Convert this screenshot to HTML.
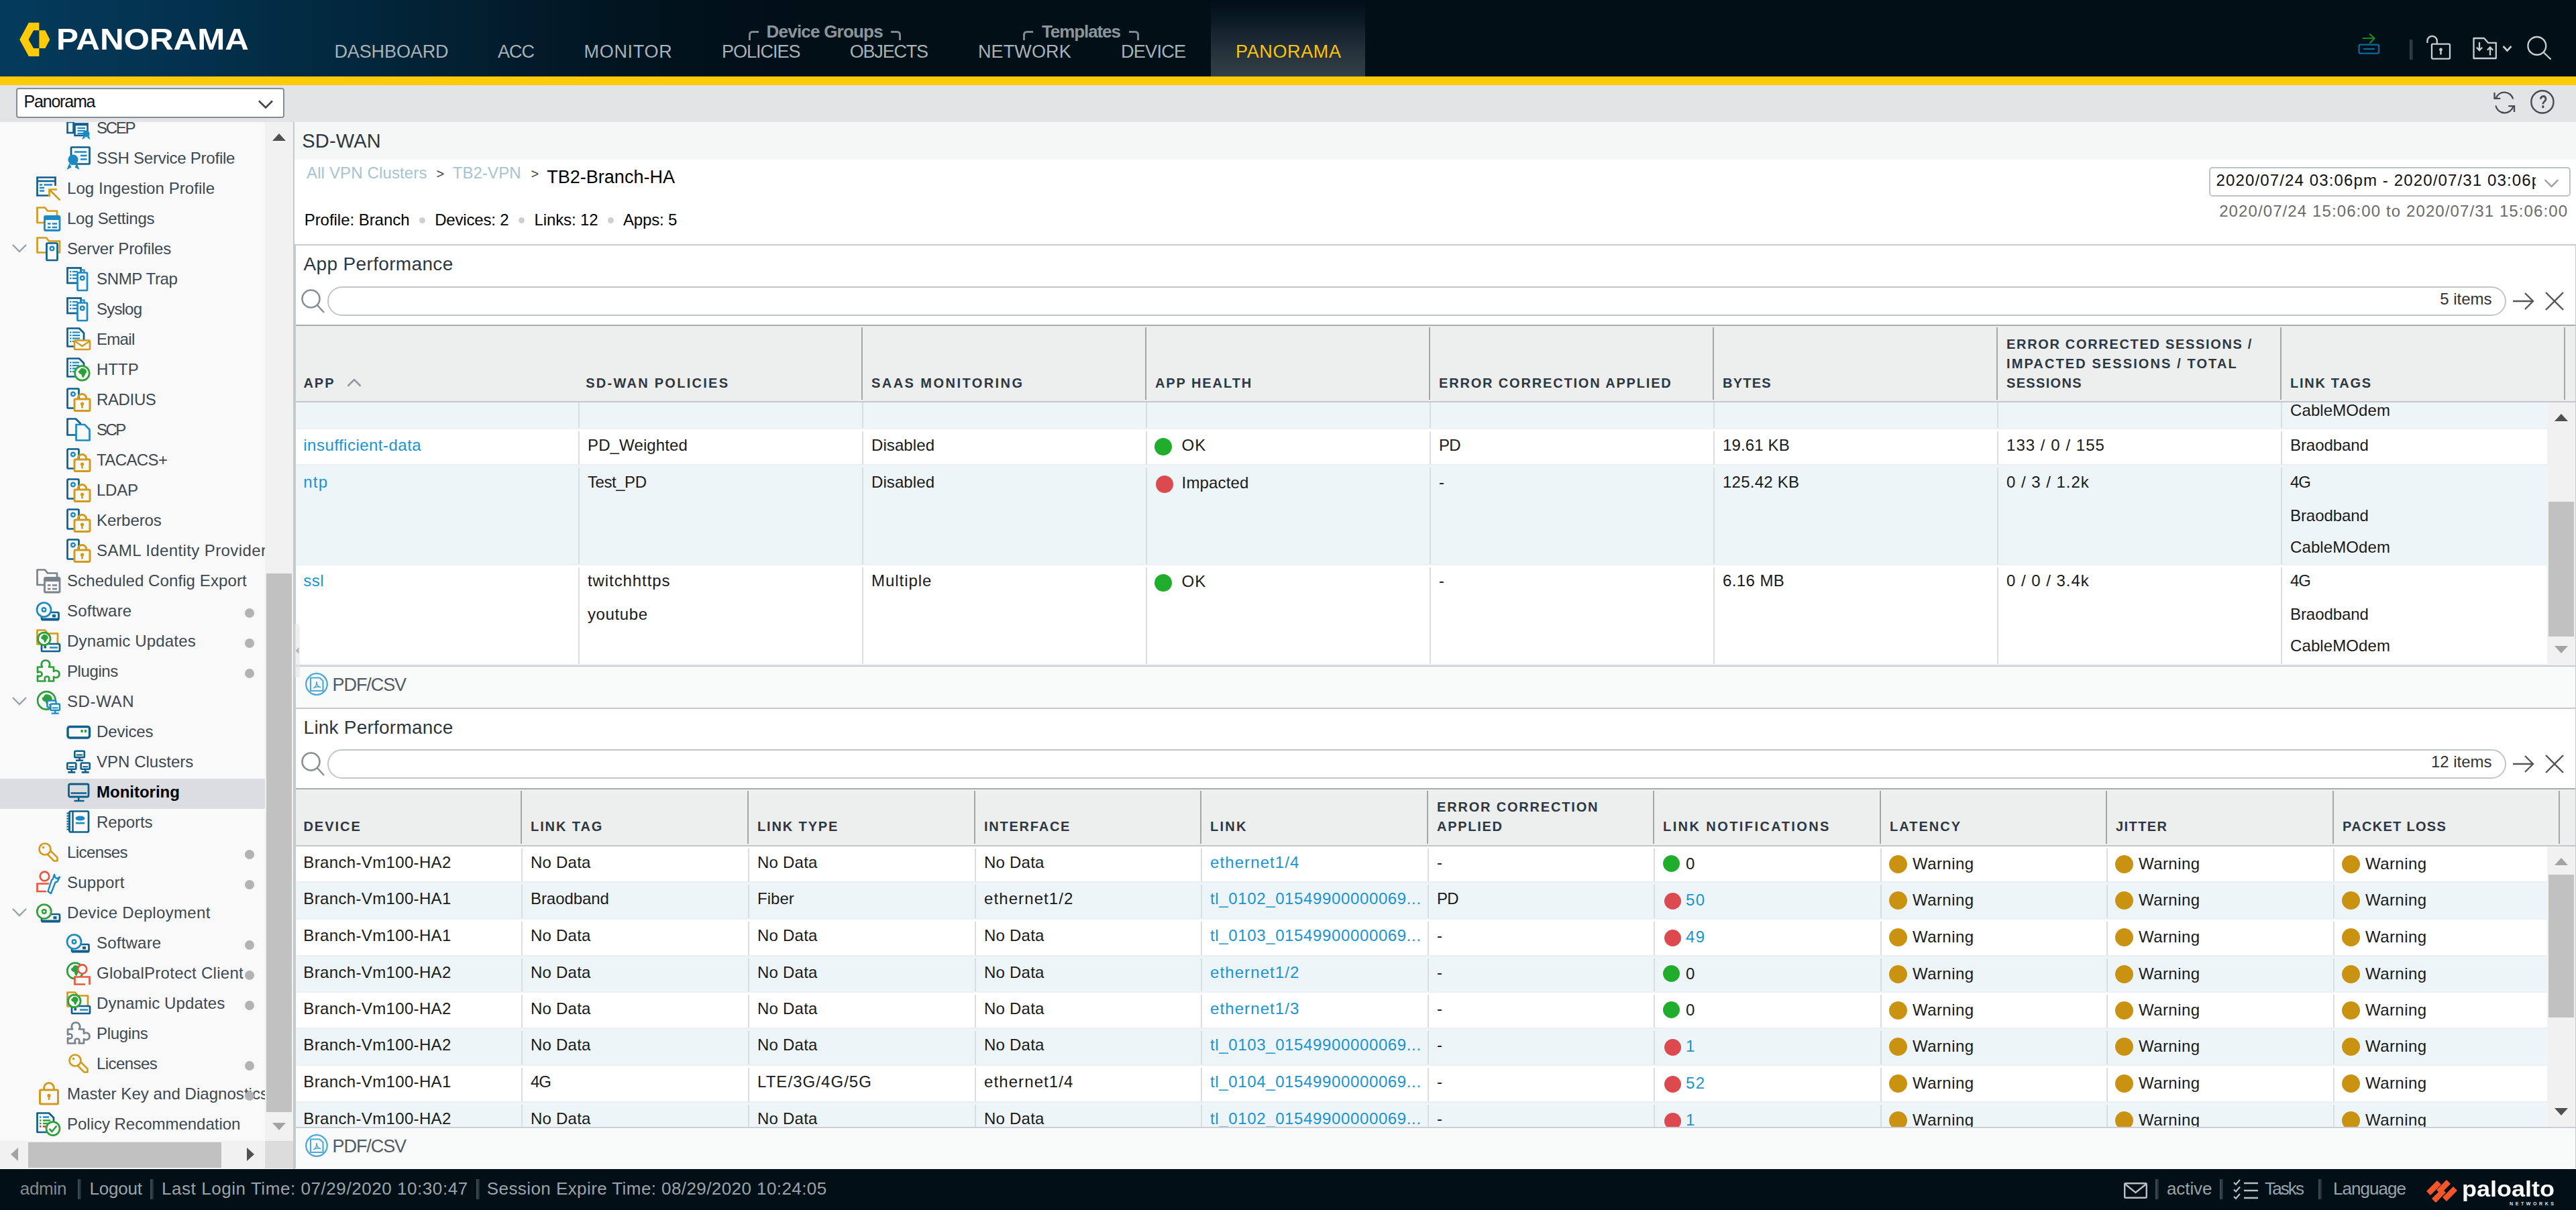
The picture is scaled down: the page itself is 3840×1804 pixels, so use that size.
<!DOCTYPE html>
<html lang="en"><head><meta charset="utf-8"><title>Panorama - SD-WAN Monitoring</title>
<style>
html,body{margin:0;padding:0}
html{overflow:hidden;width:3840px;height:1804px}
body{width:3840px;height:1804px;overflow:hidden;position:relative;background:#fff;font-family:'Liberation Sans',sans-serif;font-size:24px;color:#1a1a1a}
.t{position:absolute;white-space:pre;line-height:40px}
svg{position:absolute;overflow:visible}
.clip{position:absolute;overflow:hidden}
</style></head><body>
<div style="position:absolute;left:0px;top:0px;width:3840px;height:114px;background:linear-gradient(90deg,#043b5c 0px,#03324f 260px,#02263a 560px,#021a29 800px,#01121c 1000px,#010f17 1200px,#010f17 3840px)"></div>
<div style="position:absolute;left:1805px;top:2px;width:230px;height:112px;background:linear-gradient(180deg,#010f17 0%,#0a1a23 25%,#26343c 70%,#333f46 100%)"></div>
<div style="position:absolute;left:0px;top:114px;width:3840px;height:13px;background:#ffca08"></div>
<svg style="left:29px;top:33px" width="46" height="52" viewBox="0 0 46 52" fill="none"><path d="M0.2 26 L13.9 0.8 H29.4 V12.2 H21 L13.5 26 L21 38.9 H29.4 V51 H13.9 Z M29.4 12.2 H38.4 L45.3 26 L38.4 38.9 H29.4 Z" fill="#ffca08"/></svg>
<span class="t" style="top:39.0px;font-size:44px;color:#fff;font-weight:700;transform:scaleX(1.1218);transform-origin:0 50%;left:84.2px;">PANORAMA</span>
<span class="t" style="top:57.4px;font-size:27px;color:#a8b2b8;letter-spacing:-0.10px;left:498.4px;">DASHBOARD</span>
<span class="t" style="top:57.4px;font-size:27px;color:#a8b2b8;letter-spacing:-1.01px;left:742.0px;">ACC</span>
<span class="t" style="top:57.4px;font-size:27px;color:#a8b2b8;letter-spacing:0.70px;left:870.5px;">MONITOR</span>
<span class="t" style="top:57.4px;font-size:27px;color:#a8b2b8;letter-spacing:-0.99px;left:1076.0px;">POLICIES</span>
<span class="t" style="top:57.4px;font-size:27px;color:#a8b2b8;letter-spacing:-1.22px;left:1266.8px;">OBJECTS</span>
<span class="t" style="top:57.4px;font-size:27px;color:#a8b2b8;letter-spacing:0.12px;left:1458.0px;">NETWORK</span>
<span class="t" style="top:57.4px;font-size:27px;color:#a8b2b8;letter-spacing:-0.71px;left:1671.0px;">DEVICE</span>
<span class="t" style="top:57.4px;font-size:27px;color:#ffc20e;letter-spacing:0.64px;left:1842.0px;">PANORAMA</span>
<span class="t" style="top:26.5px;font-size:26px;color:#8c959b;font-weight:700;letter-spacing:-0.79px;left:1142.6px;">Device Groups</span>
<span class="t" style="top:26.5px;font-size:26px;color:#8c959b;font-weight:700;letter-spacing:-1.09px;left:1553.0px;">Templates</span>
<svg style="left:1116px;top:46px" width="16" height="15" viewBox="0 0 16 15" fill="none"><path d="M1.5 14 V6 Q1.5 1.5 6 1.5 H15" stroke="#7f888e" stroke-width="3"/></svg>
<svg style="left:1327px;top:46px" width="16" height="15" viewBox="0 0 16 15" fill="none"><path d="M14.5 14 V6 Q14.5 1.5 10 1.5 H1" stroke="#7f888e" stroke-width="3"/></svg>
<svg style="left:1525px;top:46px" width="16" height="15" viewBox="0 0 16 15" fill="none"><path d="M1.5 14 V6 Q1.5 1.5 6 1.5 H15" stroke="#7f888e" stroke-width="3"/></svg>
<svg style="left:1682px;top:46px" width="16" height="15" viewBox="0 0 16 15" fill="none"><path d="M14.5 14 V6 Q14.5 1.5 10 1.5 H1" stroke="#7f888e" stroke-width="3"/></svg>
<svg style="left:3515px;top:49px" width="33" height="33" viewBox="0 0 33 33" fill="none"><rect x="1.6" y="17.6" width="29.4" height="13" rx="2" stroke="#0b699d" stroke-width="2.3"/><path d="M8 24 H25" stroke="#0b699d" stroke-width="2.3"/><path d="M7 8 H24 M17 1.5 L24.5 8 L17.5 15.5" stroke="#1d8629" stroke-width="2.2"/></svg>
<div style="position:absolute;left:3592px;top:59px;width:5px;height:30px;background:linear-gradient(90deg,#3c4850,#1c272f)"></div>
<svg style="left:3616px;top:52px" width="38" height="38" viewBox="0 0 38 38" fill="none"><rect x="9" y="13.6" width="27" height="22" rx="1.5" stroke="#c9ced2" stroke-width="2.3"/><path d="M2.4 12 V9 A7.2 7.2 0 0 1 16.8 9 V13.5" stroke="#c9ced2" stroke-width="2.3"/><circle cx="22.5" cy="22" r="2.4" fill="#c9ced2"/><path d="M22.5 22.5 V29.5" stroke="#c9ced2" stroke-width="2.4"/></svg>
<svg style="left:3686px;top:55px" width="62" height="34" viewBox="0 0 62 34" fill="none"><path d="M1.5 32 V2 H17 L23 8.8 H34.8 V32 Z" stroke="#c9ced2" stroke-width="2.3" stroke-linejoin="round"/><path d="M10 8 V20 M5.8 15.8 L10 20 L14.2 15.8 M26 27.5 V15.5 M21.8 19.7 L26 15.5 L30.2 19.7" stroke="#c9ced2" stroke-width="2.3"/><path d="M45.5 14 L51.5 20.5 L57.5 14" stroke="#c9ced2" stroke-width="2.6"/></svg>
<svg style="left:3766px;top:52px" width="38" height="38" viewBox="0 0 38 38" fill="none"><circle cx="15.8" cy="16.4" r="13.4" stroke="#c9ced2" stroke-width="2.4"/><path d="M25.5 26 L36.5 36.5" stroke="#c9ced2" stroke-width="2.4"/></svg>
<div style="position:absolute;left:0px;top:127px;width:3840px;height:55px;background:#e3e4e6"></div>
<div style="position:absolute;left:24px;top:131px;width:400px;height:44.5px;box-sizing:border-box;background:#fff;border:2px solid #868d94;border-radius:4px"></div>
<span class="t" style="top:131.2px;font-size:25px;color:#111;letter-spacing:-1.22px;left:35.6px;">Panorama</span>
<svg style="left:384px;top:148px" width="24" height="16" viewBox="0 0 24 16" fill="none"><path d="M2 2.5 L12 12.5 L22 2.5" stroke="#444" stroke-width="2.6"/></svg>
<svg style="left:3716px;top:135px" width="36" height="36" viewBox="0 0 36 36" fill="none"><path d="M30.2 12.5 A13.5 13.5 0 0 0 4.5 11.5 M4.3 22.5 A13.5 13.5 0 0 0 30.5 23.5" stroke="#464c52" stroke-width="2.3"/><path d="M2.5 3 V11.8 H11.3 M32 32 V23.2 H23.2" stroke="#464c52" stroke-width="2.3"/></svg>
<svg style="left:3771px;top:133px" width="38" height="38" viewBox="0 0 38 38" fill="none"><circle cx="18.9" cy="18.9" r="16.6" stroke="#464c52" stroke-width="2.4"/></svg>
<span class="t" style="top:132.4px;font-size:28px;color:#464c52;font-weight:700;transform:scaleX(0.7306);transform-origin:0 50%;left:3784.6px;">?</span>
<div style="position:absolute;left:0px;top:182px;width:395px;height:1519px;background:#f9f9f9"></div>
<div class="clip" style="left:0;top:182px;width:395px;height:1519px">
<svg style="filter:blur(.5px);left:99px;top:-9px" width="36" height="36" viewBox="0 0 36 36" fill="none"><rect x="1.5" y="9" width="9" height="16" stroke="#0e5f8c" stroke-width="2.6"/><rect x="12.5" y="11.5" width="19" height="17.5" fill="#f9f9f9" stroke="#0e5f8c" stroke-width="2.6"/><path d="M12.5 13 H31.5" stroke="#0e5f8c" stroke-width="2.7"/><path d="M16.5 18 H28" stroke="#1b8ac4" stroke-width="2.2"/><path d="M16.5 22 H28" stroke="#1b8ac4" stroke-width="2.2"/><path d="M16.5 26 H28" stroke="#1b8ac4" stroke-width="2.2"/><circle cx="29.5" cy="26.5" r="5" fill="#1b8ac4"/><path d="M25.5 28.5 L23.5 35 L28 32.5 Z M33.5 28.5 L35.5 35 L31 32.5 Z" fill="#1b8ac4"/></svg>
<span class="t" style="top:-11.0px;font-size:24px;color:#3d4852;letter-spacing:-2.29px;left:144.0px;">SCEP</span>
<svg style="filter:blur(.5px);left:99px;top:36px" width="36" height="36" viewBox="0 0 36 36" fill="none"><rect x="7" y="1.5" width="27.5" height="25" rx="1" fill="#f9f9f9" stroke="#0e5f8c" stroke-width="2.7"/><path d="M12 8.5 H30 M21 14 H30.5 M21 19.5 H30.5" stroke="#1b8ac4" stroke-width="2.6"/><circle cx="10" cy="20" r="7.6" fill="#1b8ac4"/><path d="M4.5 25 L0.5 35 L7.5 31.5 Z M15.5 25 L19.5 35 L12.5 31.5 Z" fill="#1b8ac4"/></svg>
<span class="t" style="top:34.0px;font-size:24px;color:#3d4852;letter-spacing:-0.24px;left:144.0px;">SSH Service Profile</span>
<svg style="filter:blur(.5px);left:54px;top:81px" width="36" height="36" viewBox="0 0 36 36" fill="none"><path d="M18 28.5 H1.5 V1.5 H28.5 V14" stroke="#0e5f8c" stroke-width="2.7"/><path d="M1.5 7 H28.5" stroke="#0e5f8c" stroke-width="2.6"/><path d="M5 12.5 h4 M11.5 12.5 H24 M5 17 H12 M5 21.5 H12" stroke="#1b8ac4" stroke-width="2.4"/><path d="M31 19.5 H19.5 V30.5 M20 20 L35.5 35.5" stroke="#d29b1c" stroke-width="2.7"/></svg>
<span class="t" style="top:79.0px;font-size:24px;color:#3d4852;letter-spacing:0.06px;left:100.0px;">Log Ingestion Profile</span>
<svg style="filter:blur(.5px);left:54px;top:126px" width="36" height="36" viewBox="0 0 36 36" fill="none"><path d="M1.5 24 V1.5 H13 L17 6.5 H31 V24 Z" stroke="#d29b1c" stroke-width="2.7" stroke-linejoin="round"/><rect x="12.5" y="14.5" width="22.5" height="21.0" rx="1.5" fill="#f9f9f9" stroke="#1b8ac4" stroke-width="2.8"/><rect x="12.5" y="14.5" width="22.5" height="5.5" fill="#1b8ac4"/><path d="M17.0 25.5 h4.5 M24.0 25.5 H31" stroke="#1b8ac4" stroke-width="2.4"/><path d="M17.0 31.0 h4.5 M24.0 31.0 H31" stroke="#1b8ac4" stroke-width="2.4"/></svg>
<span class="t" style="top:124.0px;font-size:24px;color:#3d4852;letter-spacing:-0.27px;left:100.0px;">Log Settings</span>
<svg style="filter:blur(.5px);left:54px;top:171px" width="36" height="36" viewBox="0 0 36 36" fill="none"><path d="M1.5 23.5 V1.5 H15 L19 6.5 H35 V23.5 Z" stroke="#d29b1c" stroke-width="2.7" stroke-linejoin="round"/><rect x="15.5" y="9.5" width="16.0" height="25.5" rx="1.5" fill="#f9f9f9" stroke="#0e5f8c" stroke-width="2.7"/><circle cx="23.5" cy="17.5" r="2.8" stroke="#1b8ac4" stroke-width="2.4"/></svg>
<svg style="left:17px;top:181px" width="24" height="16" viewBox="0 0 24 16" fill="none"><path d="M2 2 L12 12 L22 2" stroke="#9aa1a7" stroke-width="2.4"/></svg>
<span class="t" style="top:169.0px;font-size:24px;color:#3d4852;letter-spacing:-0.15px;left:100.0px;">Server Profiles</span>
<svg style="filter:blur(.5px);left:99px;top:216px" width="36" height="36" viewBox="0 0 36 36" fill="none"><rect x="1.5" y="1.5" width="20" height="22.5" fill="#f9f9f9" stroke="#0e5f8c" stroke-width="2.7"/><path d="M9 7 H17" stroke="#1b8ac4" stroke-width="2.2"/><path d="M5 7 h2.4" stroke="#1b8ac4" stroke-width="2.2"/><path d="M9 12 H17" stroke="#1b8ac4" stroke-width="2.2"/><path d="M5 12 h2.4" stroke="#1b8ac4" stroke-width="2.2"/><path d="M9 17 H17" stroke="#1b8ac4" stroke-width="2.2"/><path d="M5 17 h2.4" stroke="#1b8ac4" stroke-width="2.2"/><rect x="21.5" y="4.5" width="5" height="5" stroke="#1b8ac4" stroke-width="2.2"/><rect x="16.5" y="8.5" width="14.5" height="26.5" rx="1.5" fill="#f9f9f9" stroke="#1b8ac4" stroke-width="2.7"/><circle cx="23.75" cy="16.5" r="2.8" stroke="#1b8ac4" stroke-width="2.4"/></svg>
<span class="t" style="top:214.0px;font-size:24px;color:#3d4852;letter-spacing:-0.33px;left:144.0px;">SNMP Trap</span>
<svg style="filter:blur(.5px);left:99px;top:261px" width="36" height="36" viewBox="0 0 36 36" fill="none"><rect x="1.5" y="1.5" width="20" height="22.5" fill="#f9f9f9" stroke="#0e5f8c" stroke-width="2.7"/><path d="M9 7 H17" stroke="#1b8ac4" stroke-width="2.2"/><path d="M5 7 h2.4" stroke="#1b8ac4" stroke-width="2.2"/><path d="M9 12 H17" stroke="#1b8ac4" stroke-width="2.2"/><path d="M5 12 h2.4" stroke="#1b8ac4" stroke-width="2.2"/><path d="M9 17 H17" stroke="#1b8ac4" stroke-width="2.2"/><path d="M5 17 h2.4" stroke="#1b8ac4" stroke-width="2.2"/><rect x="21.5" y="4.5" width="5" height="5" stroke="#1b8ac4" stroke-width="2.2"/><rect x="16.5" y="8.5" width="14.5" height="26.5" rx="1.5" fill="#f9f9f9" stroke="#1b8ac4" stroke-width="2.7"/><circle cx="23.75" cy="16.5" r="2.8" stroke="#1b8ac4" stroke-width="2.4"/></svg>
<span class="t" style="top:259.0px;font-size:24px;color:#3d4852;letter-spacing:-0.81px;left:144.0px;">Syslog</span>
<svg style="filter:blur(.5px);left:99px;top:306px" width="36" height="36" viewBox="0 0 36 36" fill="none"><path d="M1.5 1.5 H19 L26 8.5 V28.5 H1.5 Z" stroke="#0e5f8c" stroke-width="2.7" stroke-linejoin="round" fill="#f9f9f9"/><path d="M9 7.5 H20" stroke="#1b8ac4" stroke-width="2.2"/><path d="M5 7.5 h2.4" stroke="#1b8ac4" stroke-width="2.2"/><path d="M9 12 H20" stroke="#1b8ac4" stroke-width="2.2"/><path d="M5 12 h2.4" stroke="#1b8ac4" stroke-width="2.2"/><path d="M9 16.5 H20" stroke="#1b8ac4" stroke-width="2.2"/><path d="M5 16.5 h2.4" stroke="#1b8ac4" stroke-width="2.2"/><path d="M9 21 H20" stroke="#1b8ac4" stroke-width="2.2"/><path d="M5 21 h2.4" stroke="#1b8ac4" stroke-width="2.2"/><rect x="12" y="19.5" width="23" height="13.5" rx="1.5" fill="#f9f9f9" stroke="#d29b1c" stroke-width="2.6"/><path d="M13 21 L23.5 28 L34 21" stroke="#d29b1c" stroke-width="2.4"/></svg>
<span class="t" style="top:304.0px;font-size:24px;color:#3d4852;letter-spacing:-0.70px;left:144.0px;">Email</span>
<svg style="filter:blur(.5px);left:99px;top:351px" width="36" height="36" viewBox="0 0 36 36" fill="none"><path d="M1.5 1.5 H19 L26 8.5 V28.5 H1.5 Z" stroke="#0e5f8c" stroke-width="2.7" stroke-linejoin="round" fill="#f9f9f9"/><path d="M9 7.5 H19" stroke="#1b8ac4" stroke-width="2.2"/><path d="M5 7.5 h2.4" stroke="#1b8ac4" stroke-width="2.2"/><path d="M9 12 H19" stroke="#1b8ac4" stroke-width="2.2"/><path d="M5 12 h2.4" stroke="#1b8ac4" stroke-width="2.2"/><path d="M9 16.5 H19" stroke="#1b8ac4" stroke-width="2.2"/><path d="M5 16.5 h2.4" stroke="#1b8ac4" stroke-width="2.2"/><path d="M9 21 H19" stroke="#1b8ac4" stroke-width="2.2"/><path d="M5 21 h2.4" stroke="#1b8ac4" stroke-width="2.2"/><circle cx="23.4" cy="23.4" r="10.8" fill="#f4faf4" stroke="#2e9f3b" stroke-width="2.7"/><path d="M21.8 16.3 C26.6 14.8 31.0 18.5 30.1 22.5 C28.3 23.4 27.5 26.6 25.6 29.9 C23.9 31.0 22.9 27.5 22.3 25.0 C19.3 24.5 17.5 22.3 18.2 19.9 C20.2 19.5 20.7 17.1 21.8 16.3 Z" fill="#2e9f3b"/></svg>
<span class="t" style="top:349.0px;font-size:24px;color:#3d4852;letter-spacing:0.04px;left:144.0px;">HTTP</span>
<svg style="filter:blur(.5px);left:99px;top:396px" width="36" height="36" viewBox="0 0 36 36" fill="none"><rect x="1.5" y="1.5" width="17.0" height="29.0" rx="1.5" fill="#f9f9f9" stroke="#0e5f8c" stroke-width="2.7"/><circle cx="10.0" cy="9.5" r="2.8" stroke="#1b8ac4" stroke-width="2.4"/><path d="M17.3 17 V15.7 A6.2 6.2 0 0 1 29.7 15.7 V17" stroke="#d29b1c" stroke-width="3"/><rect x="12" y="17" width="23" height="17.5" rx="1.5" fill="#f9f9f9" stroke="#d29b1c" stroke-width="3"/><circle cx="23.5" cy="24.0" r="2.6" fill="#d29b1c"/><path d="M23.5 24.0 V30.5" stroke="#d29b1c" stroke-width="2.6"/></svg>
<span class="t" style="top:394.0px;font-size:24px;color:#3d4852;letter-spacing:-0.36px;left:144.0px;">RADIUS</span>
<svg style="filter:blur(.5px);left:99px;top:441px" width="36" height="36" viewBox="0 0 36 36" fill="none"><path d="M1.5 1.5 H14 L21 8.5 V25.5 H1.5 Z" stroke="#0e5f8c" stroke-width="2.7" stroke-linejoin="round"/><path d="M14.5 10 H27 L34.5 17.5 V33.5 H14.5 Z" fill="#f9f9f9" stroke="#1b8ac4" stroke-width="2.7" stroke-linejoin="round"/></svg>
<span class="t" style="top:439.0px;font-size:24px;color:#3d4852;letter-spacing:-2.53px;left:144.0px;">SCP</span>
<svg style="filter:blur(.5px);left:99px;top:486px" width="36" height="36" viewBox="0 0 36 36" fill="none"><rect x="1.5" y="1.5" width="17.0" height="29.0" rx="1.5" fill="#f9f9f9" stroke="#0e5f8c" stroke-width="2.7"/><circle cx="10.0" cy="9.5" r="2.8" stroke="#1b8ac4" stroke-width="2.4"/><path d="M17.3 17 V15.7 A6.2 6.2 0 0 1 29.7 15.7 V17" stroke="#d29b1c" stroke-width="3"/><rect x="12" y="17" width="23" height="17.5" rx="1.5" fill="#f9f9f9" stroke="#d29b1c" stroke-width="3"/><circle cx="23.5" cy="24.0" r="2.6" fill="#d29b1c"/><path d="M23.5 24.0 V30.5" stroke="#d29b1c" stroke-width="2.6"/></svg>
<span class="t" style="top:484.0px;font-size:24px;color:#3d4852;letter-spacing:-0.60px;left:144.0px;">TACACS+</span>
<svg style="filter:blur(.5px);left:99px;top:531px" width="36" height="36" viewBox="0 0 36 36" fill="none"><rect x="1.5" y="1.5" width="17.0" height="29.0" rx="1.5" fill="#f9f9f9" stroke="#0e5f8c" stroke-width="2.7"/><circle cx="10.0" cy="9.5" r="2.8" stroke="#1b8ac4" stroke-width="2.4"/><path d="M17.3 17 V15.7 A6.2 6.2 0 0 1 29.7 15.7 V17" stroke="#d29b1c" stroke-width="3"/><rect x="12" y="17" width="23" height="17.5" rx="1.5" fill="#f9f9f9" stroke="#d29b1c" stroke-width="3"/><circle cx="23.5" cy="24.0" r="2.6" fill="#d29b1c"/><path d="M23.5 24.0 V30.5" stroke="#d29b1c" stroke-width="2.6"/></svg>
<span class="t" style="top:529.0px;font-size:24px;color:#3d4852;letter-spacing:-0.23px;left:144.0px;">LDAP</span>
<svg style="filter:blur(.5px);left:99px;top:576px" width="36" height="36" viewBox="0 0 36 36" fill="none"><rect x="1.5" y="1.5" width="17.0" height="29.0" rx="1.5" fill="#f9f9f9" stroke="#0e5f8c" stroke-width="2.7"/><circle cx="10.0" cy="9.5" r="2.8" stroke="#1b8ac4" stroke-width="2.4"/><path d="M17.3 17 V15.7 A6.2 6.2 0 0 1 29.7 15.7 V17" stroke="#d29b1c" stroke-width="3"/><rect x="12" y="17" width="23" height="17.5" rx="1.5" fill="#f9f9f9" stroke="#d29b1c" stroke-width="3"/><circle cx="23.5" cy="24.0" r="2.6" fill="#d29b1c"/><path d="M23.5 24.0 V30.5" stroke="#d29b1c" stroke-width="2.6"/></svg>
<span class="t" style="top:574.0px;font-size:24px;color:#3d4852;letter-spacing:-0.08px;left:144.0px;">Kerberos</span>
<svg style="filter:blur(.5px);left:99px;top:621px" width="36" height="36" viewBox="0 0 36 36" fill="none"><rect x="1.5" y="1.5" width="17.0" height="29.0" rx="1.5" fill="#f9f9f9" stroke="#0e5f8c" stroke-width="2.7"/><circle cx="10.0" cy="9.5" r="2.8" stroke="#1b8ac4" stroke-width="2.4"/><path d="M17.3 17 V15.7 A6.2 6.2 0 0 1 29.7 15.7 V17" stroke="#d29b1c" stroke-width="3"/><rect x="12" y="17" width="23" height="17.5" rx="1.5" fill="#f9f9f9" stroke="#d29b1c" stroke-width="3"/><circle cx="23.5" cy="24.0" r="2.6" fill="#d29b1c"/><path d="M23.5 24.0 V30.5" stroke="#d29b1c" stroke-width="2.6"/></svg>
<span class="t" style="top:619.0px;font-size:24px;color:#3d4852;letter-spacing:0.40px;left:144.0px;">SAML Identity Provider</span>
<svg style="filter:blur(.5px);left:54px;top:666px" width="36" height="36" viewBox="0 0 36 36" fill="none"><path d="M1.5 24 V1.5 H13 L17 6.5 H31 V24 Z" stroke="#7a828a" stroke-width="2.7" stroke-linejoin="round"/><rect x="12.5" y="13.5" width="22.5" height="21.5" rx="1.5" fill="#f9f9f9" stroke="#7a828a" stroke-width="2.8"/><rect x="12.5" y="13.5" width="22.5" height="5.5" fill="#7a828a"/><path d="M17.0 24.5 h4.5 M24.0 24.5 H31" stroke="#7a828a" stroke-width="2.4"/><path d="M17.0 30.0 h4.5 M24.0 30.0 H31" stroke="#7a828a" stroke-width="2.4"/></svg>
<span class="t" style="top:664.0px;font-size:24px;color:#3d4852;letter-spacing:0.10px;left:100.0px;">Scheduled Config Export</span>
<svg style="filter:blur(.5px);left:54px;top:711px" width="36" height="36" viewBox="0 0 36 36" fill="none"><rect x="8" y="20" width="25.5" height="10.5" rx="1.5" fill="#f9f9f9" stroke="#0e5f8c" stroke-width="2.7"/><rect x="24.0" y="23.2" width="5" height="4.1" fill="#0e5f8c"/><path d="M8 30.5 H33.5" stroke="#0e5f8c" stroke-width="4"/><circle cx="11.5" cy="16" r="10.5" fill="#f9f9f9" stroke="#1b8ac4" stroke-width="2.7"/><circle cx="11.5" cy="16" r="2.8" stroke="#1b8ac4" stroke-width="2.4"/></svg>
<span class="t" style="top:709.0px;font-size:24px;color:#3d4852;letter-spacing:0.21px;left:100.0px;">Software</span>
<div style="position:absolute;left:365px;top:724.5px;width:14px;height:14px;background:#b3b3b3;border-radius:50%"></div>
<svg style="filter:blur(.5px);left:54px;top:756px" width="36" height="36" viewBox="0 0 36 36" fill="none"><path d="M1.5 22.5 V1.5 H13 L17 6.5 H32 V22.5 Z" stroke="#d29b1c" stroke-width="2.7" stroke-linejoin="round"/><rect x="8" y="22" width="27" height="11" rx="1.5" fill="#f9f9f9" stroke="#0e5f8c" stroke-width="2.7"/><path d="M20 27.5 H32" stroke="#1b8ac4" stroke-width="2.4"/><rect x="11.5" y="25" width="3.5" height="3.5" fill="#0e5f8c"/><circle cx="11.8" cy="14.4" r="9.3" fill="#f4faf4" stroke="#2e9f3b" stroke-width="2.8"/><path d="M10.4 8.3 C14.6 7.0 18.3 10.2 17.6 13.7 C16.0 14.4 15.3 17.2 13.7 20.0 C12.3 20.9 11.3 17.9 10.9 15.8 C8.3 15.3 6.7 13.5 7.3 11.4 C9.0 11.1 9.5 9.0 10.4 8.3 Z" fill="#2e9f3b"/></svg>
<span class="t" style="top:754.0px;font-size:24px;color:#3d4852;letter-spacing:0.16px;left:100.0px;">Dynamic Updates</span>
<div style="position:absolute;left:365px;top:769.5px;width:14px;height:14px;background:#b3b3b3;border-radius:50%"></div>
<svg style="filter:blur(.5px);left:54px;top:801px" width="36" height="36" viewBox="0 0 36 36" fill="none"><path d="M3.5 13 H10.5 C8 9 9.5 3 15.5 3 C21.5 3 23 9 20.5 13 H27.5 V19.5 C31 17 36 18.5 36 23.5 C36 28.5 31 30 27.5 27.5 V34 H20 C22 30 20.5 27 17.5 27 C14.5 27 13 30 15 34 H3.5 V26 C7 28 10 26.5 10 23.5 C10 20.5 7 19 3.5 21 Z" stroke="#2e9f3b" stroke-width="2.7" stroke-linejoin="round" transform="translate(-1.5 -1.5)"/></svg>
<span class="t" style="top:799.0px;font-size:24px;color:#3d4852;letter-spacing:-0.40px;left:100.0px;">Plugins</span>
<div style="position:absolute;left:365px;top:814.5px;width:14px;height:14px;background:#b3b3b3;border-radius:50%"></div>
<svg style="filter:blur(.5px);left:54px;top:846px" width="36" height="36" viewBox="0 0 36 36" fill="none"><circle cx="15.4" cy="16.4" r="13.3" fill="#f4faf4" stroke="#2e9f3b" stroke-width="2.7"/><path d="M13.4 7.6 C19.4 5.8 24.7 10.4 23.6 15.3 C21.4 16.4 20.5 20.4 18.1 24.4 C16.1 25.7 14.7 21.5 14.1 18.4 C10.3 17.7 8.1 15.1 9.0 12.1 C11.4 11.6 12.1 8.7 13.4 7.6 Z" fill="#2e9f3b"/><rect x="16.5" y="16.5" width="13" height="10" rx="1.2" fill="#f9f9f9" stroke="#1b8ac4" stroke-width="2.4"/><path d="M19.0 22.9 H27.0" stroke="#1b8ac4" stroke-width="2"/><rect x="21.5" y="21.5" width="13.5" height="9.5" rx="1.2" fill="#f9f9f9" stroke="#1b8ac4" stroke-width="2.4"/><path d="M24.0 27.4 H32.5" stroke="#1b8ac4" stroke-width="2"/><path d="M28.25 31.0 v4 M22.75 35.6 h11" stroke="#1b8ac4" stroke-width="2.4"/></svg>
<svg style="left:17px;top:856px" width="24" height="16" viewBox="0 0 24 16" fill="none"><path d="M2 2 L12 12 L22 2" stroke="#9aa1a7" stroke-width="2.4"/></svg>
<span class="t" style="top:844.0px;font-size:24px;color:#3d4852;letter-spacing:0.61px;left:100.0px;">SD-WAN</span>
<svg style="filter:blur(.5px);left:99px;top:891px" width="36" height="36" viewBox="0 0 36 36" fill="none"><rect x="2" y="10.5" width="32.5" height="16.5" rx="3" stroke="#0e5f8c" stroke-width="3.4"/><rect x="21.5" y="15" width="3.2" height="4" fill="#2e9f3b"/><rect x="27" y="15" width="3.2" height="4" fill="#2e9f3b"/></svg>
<span class="t" style="top:889.0px;font-size:24px;color:#3d4852;letter-spacing:-0.13px;left:144.0px;">Devices</span>
<svg style="filter:blur(.5px);left:99px;top:936px" width="36" height="36" viewBox="0 0 36 36" fill="none"><rect x="12.3" y="1.8" width="14.5" height="9.3" rx="1.2" fill="#f9f9f9" stroke="#0e5f8c" stroke-width="2.6"/><path d="M14.8 7.500000000000002 H24.3" stroke="#0e5f8c" stroke-width="2"/><path d="M19.55 11.100000000000001 v4 M14.05 15.700000000000001 h11" stroke="#0e5f8c" stroke-width="2.6"/><rect x="1.3" y="19.5" width="13" height="9.3" rx="1.2" fill="#f9f9f9" stroke="#0e5f8c" stroke-width="2.6"/><path d="M3.8 25.2 H11.8" stroke="#0e5f8c" stroke-width="2"/><path d="M7.8 28.8 v4 M2.3 33.4 h11" stroke="#0e5f8c" stroke-width="2.6"/><rect x="21.7" y="19.5" width="13" height="9.3" rx="1.2" fill="#f9f9f9" stroke="#0e5f8c" stroke-width="2.6"/><path d="M24.2 25.2 H32.2" stroke="#0e5f8c" stroke-width="2"/><path d="M28.2 28.8 v4 M22.7 33.4 h11" stroke="#0e5f8c" stroke-width="2.6"/></svg>
<span class="t" style="top:934.0px;font-size:24px;color:#3d4852;letter-spacing:0.03px;left:144.0px;">VPN Clusters</span>
<div style="position:absolute;left:0px;top:979px;width:395px;height:45px;background:#dcdde0"></div>
<svg style="filter:blur(.5px);left:99px;top:981px" width="36" height="36" viewBox="0 0 36 36" fill="none"><rect x="3.5" y="6" width="29.5" height="19" rx="2" stroke="#0e5f8c" stroke-width="2.8"/><path d="M6.5 19.5 H30 M18.2 25 V30.5 M11.5 31 H26.5" stroke="#0e5f8c" stroke-width="2.6"/></svg>
<span class="t" style="top:979.0px;font-size:24px;color:#000;font-weight:700;letter-spacing:-0.01px;left:144.0px;">Monitoring</span>
<svg style="filter:blur(.5px);left:99px;top:1026px" width="36" height="36" viewBox="0 0 36 36" fill="none"><rect x="4.5" y="1.5" width="28.5" height="31" rx="2" stroke="#0e5f8c" stroke-width="2.7"/><path d="M9.5 2 V32" stroke="#0e5f8c" stroke-width="2.4"/><path d="M0.5 4.5 H6" stroke="#0e5f8c" stroke-width="2.2"/><path d="M0.5 8.5 H6" stroke="#0e5f8c" stroke-width="2.2"/><path d="M0.5 12.5 H6" stroke="#0e5f8c" stroke-width="2.2"/><path d="M0.5 16.5 H6" stroke="#0e5f8c" stroke-width="2.2"/><path d="M0.5 20.5 H6" stroke="#0e5f8c" stroke-width="2.2"/><path d="M0.5 24.5 H6" stroke="#0e5f8c" stroke-width="2.2"/><path d="M0.5 28.5 H6" stroke="#0e5f8c" stroke-width="2.2"/><ellipse cx="20.5" cy="12" rx="7" ry="3.6" fill="#1b8ac4"/><path d="M14 19.2 H27" stroke="#1b8ac4" stroke-width="2.6"/></svg>
<span class="t" style="top:1024.0px;font-size:24px;color:#3d4852;letter-spacing:-0.07px;left:144.0px;">Reports</span>
<svg style="filter:blur(.5px);left:54px;top:1071px" width="36" height="36" viewBox="0 0 36 36" fill="none"><circle cx="13" cy="13" r="8.5" stroke="#d29b1c" stroke-width="2.7"/><circle cx="10.5" cy="10.5" r="1.8" fill="#d29b1c"/><path d="M17 21 L26.5 30.5 H31.5 V25.5 L21.5 15.5" stroke="#d29b1c" stroke-width="2.6" stroke-linejoin="round"/></svg>
<span class="t" style="top:1069.0px;font-size:24px;color:#3d4852;letter-spacing:-0.60px;left:100.0px;">Licenses</span>
<div style="position:absolute;left:365px;top:1084.5px;width:14px;height:14px;background:#b3b3b3;border-radius:50%"></div>
<svg style="filter:blur(.5px);left:54px;top:1116px" width="36" height="36" viewBox="0 0 36 36" fill="none"><circle cx="12.5" cy="8.5" r="6.8" stroke="#e8573c" stroke-width="2.7"/><path d="M19 19.5 H1.5 V31 H15" stroke="#e8573c" stroke-width="2.7"/><path d="M27 6 L24.5 13 L23 14 L17.5 31 L22 34 L28.5 17.5 L31.5 16.5 L35 9.5 L31 12 L28.5 10.5 Z" fill="#f9f9f9" stroke="#1b8ac4" stroke-width="2.4" stroke-linejoin="round"/></svg>
<span class="t" style="top:1114.0px;font-size:24px;color:#3d4852;letter-spacing:0.22px;left:100.0px;">Support</span>
<div style="position:absolute;left:365px;top:1129.5px;width:14px;height:14px;background:#b3b3b3;border-radius:50%"></div>
<svg style="filter:blur(.5px);left:54px;top:1161px" width="36" height="36" viewBox="0 0 36 36" fill="none"><rect x="8" y="20" width="27" height="10.5" rx="1.5" fill="#f9f9f9" stroke="#0e5f8c" stroke-width="2.7"/><rect x="25.5" y="23.2" width="5" height="4.1" fill="#0e5f8c"/><path d="M8 30.5 H35" stroke="#0e5f8c" stroke-width="4"/><circle cx="11.8" cy="16" r="10.5" fill="#f9f9f9" stroke="#2e9f3b" stroke-width="2.7"/><circle cx="11.8" cy="16" r="2.8" stroke="#2e9f3b" stroke-width="2.4"/></svg>
<svg style="left:17px;top:1171px" width="24" height="16" viewBox="0 0 24 16" fill="none"><path d="M2 2 L12 12 L22 2" stroke="#9aa1a7" stroke-width="2.4"/></svg>
<span class="t" style="top:1159.0px;font-size:24px;color:#3d4852;letter-spacing:0.33px;left:100.0px;">Device Deployment</span>
<svg style="filter:blur(.5px);left:99px;top:1206px" width="36" height="36" viewBox="0 0 36 36" fill="none"><rect x="8" y="20" width="25.5" height="10.5" rx="1.5" fill="#f9f9f9" stroke="#0e5f8c" stroke-width="2.7"/><rect x="24.0" y="23.2" width="5" height="4.1" fill="#0e5f8c"/><path d="M8 30.5 H33.5" stroke="#0e5f8c" stroke-width="4"/><circle cx="11.5" cy="16" r="10.5" fill="#f9f9f9" stroke="#1b8ac4" stroke-width="2.7"/><circle cx="11.5" cy="16" r="2.8" stroke="#1b8ac4" stroke-width="2.4"/></svg>
<span class="t" style="top:1204.0px;font-size:24px;color:#3d4852;letter-spacing:0.21px;left:144.0px;">Software</span>
<div style="position:absolute;left:365px;top:1219.5px;width:14px;height:14px;background:#b3b3b3;border-radius:50%"></div>
<svg style="filter:blur(.5px);left:99px;top:1251px" width="36" height="36" viewBox="0 0 36 36" fill="none"><circle cx="13" cy="14.5" r="11.8" fill="#f4faf4" stroke="#2e9f3b" stroke-width="2.7"/><path d="M11.2 6.7 C16.5 5.1 21.3 9.2 20.3 13.6 C18.3 14.5 17.5 18.0 15.4 21.6 C13.6 22.8 12.4 19.0 11.8 16.3 C8.5 15.7 6.5 13.3 7.3 10.7 C9.5 10.3 10.1 7.7 11.2 6.7 Z" fill="#2e9f3b"/><circle cx="23.7" cy="12" r="6.6" fill="#f9f9f9" stroke="#e8573c" stroke-width="2.7"/><path d="M28 34.5 H12.5 V23.5 H34.5 V35" fill="#f9f9f9" stroke="#e8573c" stroke-width="2.7"/></svg>
<span class="t" style="top:1249.0px;font-size:24px;color:#3d4852;letter-spacing:0.28px;left:144.0px;">GlobalProtect Client</span>
<div style="position:absolute;left:365px;top:1264.5px;width:14px;height:14px;background:#b3b3b3;border-radius:50%"></div>
<svg style="filter:blur(.5px);left:99px;top:1296px" width="36" height="36" viewBox="0 0 36 36" fill="none"><path d="M1.5 22.5 V1.5 H13 L17 6.5 H32 V22.5 Z" stroke="#d29b1c" stroke-width="2.7" stroke-linejoin="round"/><rect x="8" y="22" width="27" height="11" rx="1.5" fill="#f9f9f9" stroke="#0e5f8c" stroke-width="2.7"/><path d="M20 27.5 H32" stroke="#1b8ac4" stroke-width="2.4"/><rect x="11.5" y="25" width="3.5" height="3.5" fill="#0e5f8c"/><circle cx="11.8" cy="14.4" r="9.3" fill="#f4faf4" stroke="#2e9f3b" stroke-width="2.8"/><path d="M10.4 8.3 C14.6 7.0 18.3 10.2 17.6 13.7 C16.0 14.4 15.3 17.2 13.7 20.0 C12.3 20.9 11.3 17.9 10.9 15.8 C8.3 15.3 6.7 13.5 7.3 11.4 C9.0 11.1 9.5 9.0 10.4 8.3 Z" fill="#2e9f3b"/></svg>
<span class="t" style="top:1294.0px;font-size:24px;color:#3d4852;letter-spacing:0.13px;left:144.0px;">Dynamic Updates</span>
<div style="position:absolute;left:365px;top:1309.5px;width:14px;height:14px;background:#b3b3b3;border-radius:50%"></div>
<svg style="filter:blur(.5px);left:99px;top:1341px" width="36" height="36" viewBox="0 0 36 36" fill="none"><path d="M3.5 13 H10.5 C8 9 9.5 3 15.5 3 C21.5 3 23 9 20.5 13 H27.5 V19.5 C31 17 36 18.5 36 23.5 C36 28.5 31 30 27.5 27.5 V34 H20 C22 30 20.5 27 17.5 27 C14.5 27 13 30 15 34 H3.5 V26 C7 28 10 26.5 10 23.5 C10 20.5 7 19 3.5 21 Z" stroke="#7a828a" stroke-width="2.7" stroke-linejoin="round" transform="translate(-1.5 -1.5)"/></svg>
<span class="t" style="top:1339.0px;font-size:24px;color:#3d4852;letter-spacing:-0.34px;left:144.0px;">Plugins</span>
<svg style="filter:blur(.5px);left:99px;top:1386px" width="36" height="36" viewBox="0 0 36 36" fill="none"><circle cx="13" cy="13" r="8.5" stroke="#d29b1c" stroke-width="2.7"/><circle cx="10.5" cy="10.5" r="1.8" fill="#d29b1c"/><path d="M17 21 L26.5 30.5 H31.5 V25.5 L21.5 15.5" stroke="#d29b1c" stroke-width="2.6" stroke-linejoin="round"/></svg>
<span class="t" style="top:1384.0px;font-size:24px;color:#3d4852;letter-spacing:-0.56px;left:144.0px;">Licenses</span>
<div style="position:absolute;left:365px;top:1399.5px;width:14px;height:14px;background:#b3b3b3;border-radius:50%"></div>
<svg style="filter:blur(.5px);left:54px;top:1431px" width="36" height="36" viewBox="0 0 36 36" fill="none"><path d="M11.7 12 V8.8 A7.3 7.3 0 0 1 26.3 8.8 V12" stroke="#d29b1c" stroke-width="3"/><rect x="5.5" y="12" width="27.0" height="21" rx="1.5" fill="#f9f9f9" stroke="#d29b1c" stroke-width="3"/><circle cx="19.0" cy="20.4" r="2.6" fill="#d29b1c"/><path d="M19.0 20.4 V26.9" stroke="#d29b1c" stroke-width="2.6"/></svg>
<span class="t" style="top:1429.0px;font-size:24px;color:#3d4852;letter-spacing:0.05px;left:100.0px;">Master Key and Diagnostics</span>
<div style="position:absolute;left:365px;top:1444.5px;width:14px;height:14px;background:#b3b3b3;border-radius:50%"></div>
<svg style="filter:blur(.5px);left:54px;top:1476px" width="36" height="36" viewBox="0 0 36 36" fill="none"><path d="M1.5 1.5 H19 L26 8.5 V30 H1.5 Z" fill="#f9f9f9" stroke="#0e5f8c" stroke-width="2.7" stroke-linejoin="round"/><path d="M5 7.5 h2.4 M10 7.5 H19" stroke="#1b8ac4" stroke-width="2.4"/><path d="M5 12.5 h2.4 M10 12.5 H21 M5 17 h2.4 M10 17 H21" stroke="#2e9f3b" stroke-width="2.4"/><path d="M5 21.5 h2.4 M10 21.5 H17" stroke="#d9363b" stroke-width="2.4"/><circle cx="25" cy="24.6" r="10" fill="#fff" stroke="#2e9f3b" stroke-width="2.7"/><path d="M19.5 25 L23.5 29 L30.5 20.5" stroke="#2e9f3b" stroke-width="2.7"/></svg>
<span class="t" style="top:1474.0px;font-size:24px;color:#3d4852;letter-spacing:-0.02px;left:100.0px;">Policy Recommendation</span>
</div>
<div style="position:absolute;left:395px;top:182px;width:42px;height:1519px;background:#f1f1f1"></div>
<div style="position:absolute;left:397px;top:855px;width:38px;height:803px;background:#c1c1c1"></div>
<svg style="left:406px;top:198px" width="20" height="12" viewBox="0 0 20 12" fill="none"><path d="M0 12 L10 1 L20 12 Z" fill="#505050"/></svg>
<svg style="left:406px;top:1673.5px" width="20" height="12" viewBox="0 0 20 12" fill="none"><path d="M0 0 L10 11 L20 0 Z" fill="#a3a3a3"/></svg>
<div style="position:absolute;left:0px;top:1701px;width:395px;height:41px;background:#f1f1f1"></div>
<div style="position:absolute;left:42px;top:1703px;width:288px;height:38px;background:#c1c1c1"></div>
<svg style="left:15px;top:1711px" width="12" height="20" viewBox="0 0 12 20" fill="none"><path d="M12 0 L1 10 L12 20 Z" fill="#a3a3a3"/></svg>
<svg style="left:368px;top:1711px" width="12" height="20" viewBox="0 0 12 20" fill="none"><path d="M0 0 L11 10 L0 20 Z" fill="#505050"/></svg>
<div style="position:absolute;left:395px;top:1701px;width:42px;height:41px;background:#dcdcdc"></div>
<div style="position:absolute;left:437px;top:182px;width:2px;height:1561px;background:#c5c9cc"></div>
<div style="position:absolute;left:3839px;top:364px;width:1px;height:1378px;background:#c5c9cc"></div>
<div style="position:absolute;left:439px;top:182px;width:3401px;height:56px;background:#f5f7f7"></div>
<span class="t" style="top:189.7px;font-size:29px;color:#2d3742;letter-spacing:0.19px;left:450.3px;">SD-WAN</span>
<div style="position:absolute;left:439px;top:238px;width:3401px;height:126px;background:#fff"></div>
<span class="t" style="top:238.3px;font-size:24px;color:#a5c4cf;letter-spacing:0.14px;left:457.0px;">All VPN Clusters</span>
<span class="t" style="top:238.5px;font-size:20px;color:#444;left:650.5px;">&gt;</span>
<span class="t" style="top:238.3px;font-size:24px;color:#a5c4cf;letter-spacing:0.07px;left:674.8px;">TB2-VPN</span>
<span class="t" style="top:238.5px;font-size:20px;color:#444;left:791.5px;">&gt;</span>
<span class="t" style="top:243.8px;font-size:27px;color:#000;letter-spacing:0.02px;left:815.2px;">TB2-Branch-HA</span>
<span class="t" style="top:308.2px;font-size:24px;color:#000;letter-spacing:-0.04px;left:453.7px;">Profile: Branch</span>
<span class="t" style="top:308.2px;font-size:24px;color:#000;letter-spacing:-0.19px;left:648.2px;">Devices: 2</span>
<span class="t" style="top:308.2px;font-size:24px;color:#000;letter-spacing:-0.11px;left:796.5px;">Links: 12</span>
<span class="t" style="top:308.2px;font-size:24px;color:#000;letter-spacing:-0.17px;left:929.0px;">Apps: 5</span>
<div style="position:absolute;left:625.0px;top:323.7px;width:9.4px;height:9.4px;background:#cfcfcf;border-radius:50%"></div>
<div style="position:absolute;left:772.6999999999999px;top:323.7px;width:9.4px;height:9.4px;background:#cfcfcf;border-radius:50%"></div>
<div style="position:absolute;left:905.5999999999999px;top:323.7px;width:9.4px;height:9.4px;background:#cfcfcf;border-radius:50%"></div>
<div style="position:absolute;left:3293px;top:249px;width:539px;height:44px;box-sizing:border-box;background:#fff;border:2px solid #bfc3c6;border-radius:5px"></div>
<span class="t" style="top:248.7px;font-size:24px;color:#111;letter-spacing:1.13px;left:3303.5px;width:476.5px;overflow:hidden;">2020/07/24 03:06pm - 2020/07/31 03:06p</span>
<svg style="left:3792px;top:266px" width="24" height="14" viewBox="0 0 24 14" fill="none"><path d="M1.5 2 L11.5 12 L21.5 2" stroke="#9aa0a6" stroke-width="2.4"/></svg>
<span class="t" style="top:295.4px;font-size:24px;color:#6b6b6b;letter-spacing:1.10px;right:11.9px;">2020/07/24 15:06:00 to 2020/07/31 15:06:00</span>
<div style="position:absolute;left:439px;top:364px;width:3401px;height:2px;background:#c6cacd"></div>
<div style="position:absolute;left:439px;top:366px;width:2px;height:1376px;background:#c6cacd"></div>
<span class="t" style="top:373.6px;font-size:28px;color:#2d3742;letter-spacing:0.34px;left:452.6px;">App Performance</span>
<svg style="left:448px;top:430.3px" width="38" height="38" viewBox="0 0 38 38" fill="none"><circle cx="15.5" cy="15.5" r="13" stroke="#8a8f94" stroke-width="2.6"/><path d="M25 25 L35 36" stroke="#8a8f94" stroke-width="2.6"/></svg>
<div style="position:absolute;left:488.3px;top:427.3px;width:3248px;height:44px;box-sizing:border-box;background:#fff;border:2px solid #c1c5c9;border-radius:22px"></div>
<span class="t" style="top:426.1px;font-size:24px;color:#333;right:125.4px;">5 items</span>
<svg style="left:3745px;top:435.3px" width="34" height="28" viewBox="0 0 34 28" fill="none"><path d="M1 14 H31 M19 2 L31 14 L19 26" stroke="#555" stroke-width="2.4"/></svg>
<svg style="left:3793px;top:434.3px" width="30" height="30" viewBox="0 0 30 30" fill="none"><path d="M2 2 L28 28 M28 2 L2 28" stroke="#555" stroke-width="2.4"/></svg>
<div style="position:absolute;left:441px;top:484px;width:3398px;height:2px;background:#a9adb0"></div>
<div style="position:absolute;left:441px;top:486px;width:3398px;height:113px;background:#edeeee"></div>
<div style="position:absolute;left:441px;top:598px;width:3398px;height:2px;background:#c3c7ca"></div>
<div style="position:absolute;left:1284.4px;top:488px;width:2px;height:108px;background:#a1a6a9"></div>
<div style="position:absolute;left:1707.4px;top:488px;width:2px;height:108px;background:#a1a6a9"></div>
<div style="position:absolute;left:2130.4px;top:488px;width:2px;height:108px;background:#a1a6a9"></div>
<div style="position:absolute;left:2553.4px;top:488px;width:2px;height:108px;background:#a1a6a9"></div>
<div style="position:absolute;left:2976.4px;top:488px;width:2px;height:108px;background:#a1a6a9"></div>
<div style="position:absolute;left:3399.4px;top:488px;width:2px;height:108px;background:#a1a6a9"></div>
<div style="position:absolute;left:3822.4px;top:488px;width:2px;height:108px;background:#a1a6a9"></div>
<span class="t" style="top:551.0px;font-size:20px;color:#2d3742;font-weight:700;letter-spacing:2.04px;left:452.4px;">APP</span>
<span class="t" style="top:551.0px;font-size:20px;color:#2d3742;font-weight:700;letter-spacing:2.27px;left:873.2px;">SD-WAN POLICIES</span>
<span class="t" style="top:551.0px;font-size:20px;color:#2d3742;font-weight:700;letter-spacing:2.45px;left:1299.0px;">SAAS MONITORING</span>
<span class="t" style="top:551.0px;font-size:20px;color:#2d3742;font-weight:700;letter-spacing:1.92px;left:1722.0px;">APP HEALTH</span>
<span class="t" style="top:551.0px;font-size:20px;color:#2d3742;font-weight:700;letter-spacing:1.83px;left:2145.0px;">ERROR CORRECTION APPLIED</span>
<span class="t" style="top:551.0px;font-size:20px;color:#2d3742;font-weight:700;letter-spacing:1.23px;left:2568.0px;">BYTES</span>
<span class="t" style="top:493.0px;font-size:20px;color:#2d3742;font-weight:700;letter-spacing:1.68px;left:2991.0px;">ERROR CORRECTED SESSIONS /</span>
<span class="t" style="top:522.0px;font-size:20px;color:#2d3742;font-weight:700;letter-spacing:2.10px;left:2991.0px;">IMPACTED SESSIONS / TOTAL</span>
<span class="t" style="top:551.0px;font-size:20px;color:#2d3742;font-weight:700;letter-spacing:1.32px;left:2991.0px;">SESSIONS</span>
<span class="t" style="top:551.0px;font-size:20px;color:#2d3742;font-weight:700;letter-spacing:1.73px;left:3414.0px;">LINK TAGS</span>
<svg style="left:517px;top:564px" width="22" height="13" viewBox="0 0 22 13" fill="none"><path d="M1.5 11.5 L11 2 L20.5 11.5" stroke="#8f969c" stroke-width="2.6"/></svg>
<div class="clip" style="left:441px;top:600px;width:3356px;height:392px">
<div style="position:absolute;left:0px;top:0px;width:3356px;height:40px;background:#eef5f8"></div>
<div style="position:absolute;left:0px;top:38px;width:3356px;height:2px;background:#edf1f3"></div>
<div style="position:absolute;left:421px;top:0px;width:2px;height:38px;background:#dbdee1"></div>
<div style="position:absolute;left:844px;top:0px;width:2px;height:38px;background:#dbdee1"></div>
<div style="position:absolute;left:1267px;top:0px;width:2px;height:38px;background:#dbdee1"></div>
<div style="position:absolute;left:1690px;top:0px;width:2px;height:38px;background:#dbdee1"></div>
<div style="position:absolute;left:2113px;top:0px;width:2px;height:38px;background:#dbdee1"></div>
<div style="position:absolute;left:2536px;top:0px;width:2px;height:38px;background:#dbdee1"></div>
<div style="position:absolute;left:2959px;top:0px;width:2px;height:38px;background:#dbdee1"></div>
<div style="position:absolute;left:0px;top:40px;width:3356px;height:54px;background:#fff"></div>
<div style="position:absolute;left:0px;top:92px;width:3356px;height:2px;background:#eceff1"></div>
<div style="position:absolute;left:421px;top:43px;width:2px;height:49px;background:#dbdee1"></div>
<div style="position:absolute;left:844px;top:43px;width:2px;height:49px;background:#dbdee1"></div>
<div style="position:absolute;left:1267px;top:43px;width:2px;height:49px;background:#dbdee1"></div>
<div style="position:absolute;left:1690px;top:43px;width:2px;height:49px;background:#dbdee1"></div>
<div style="position:absolute;left:2113px;top:43px;width:2px;height:49px;background:#dbdee1"></div>
<div style="position:absolute;left:2536px;top:43px;width:2px;height:49px;background:#dbdee1"></div>
<div style="position:absolute;left:2959px;top:43px;width:2px;height:49px;background:#dbdee1"></div>
<div style="position:absolute;left:0px;top:94px;width:3356px;height:149px;background:#eef5f8"></div>
<div style="position:absolute;left:0px;top:241px;width:3356px;height:2px;background:#edf1f3"></div>
<div style="position:absolute;left:421px;top:97px;width:2px;height:144px;background:#dbdee1"></div>
<div style="position:absolute;left:844px;top:97px;width:2px;height:144px;background:#dbdee1"></div>
<div style="position:absolute;left:1267px;top:97px;width:2px;height:144px;background:#dbdee1"></div>
<div style="position:absolute;left:1690px;top:97px;width:2px;height:144px;background:#dbdee1"></div>
<div style="position:absolute;left:2113px;top:97px;width:2px;height:144px;background:#dbdee1"></div>
<div style="position:absolute;left:2536px;top:97px;width:2px;height:144px;background:#dbdee1"></div>
<div style="position:absolute;left:2959px;top:97px;width:2px;height:144px;background:#dbdee1"></div>
<div style="position:absolute;left:0px;top:243px;width:3356px;height:149px;background:#fff"></div>
<div style="position:absolute;left:0px;top:390px;width:3356px;height:2px;background:#eceff1"></div>
<div style="position:absolute;left:421px;top:246px;width:2px;height:144px;background:#dbdee1"></div>
<div style="position:absolute;left:844px;top:246px;width:2px;height:144px;background:#dbdee1"></div>
<div style="position:absolute;left:1267px;top:246px;width:2px;height:144px;background:#dbdee1"></div>
<div style="position:absolute;left:1690px;top:246px;width:2px;height:144px;background:#dbdee1"></div>
<div style="position:absolute;left:2113px;top:246px;width:2px;height:144px;background:#dbdee1"></div>
<div style="position:absolute;left:2536px;top:246px;width:2px;height:144px;background:#dbdee1"></div>
<div style="position:absolute;left:2959px;top:246px;width:2px;height:144px;background:#dbdee1"></div>
<span class="t" style="top:-8.0px;font-size:24px;color:#1a1a1a;letter-spacing:0.10px;left:2973.0px;">CableMOdem</span>
<span class="t" style="top:43.5px;font-size:24px;color:#1a94d0;letter-spacing:0.48px;left:11.3px;">insufficient-data</span>
<span class="t" style="top:43.5px;font-size:24px;color:#1a1a1a;letter-spacing:0.13px;left:435.0px;">PD_Weighted</span>
<span class="t" style="top:43.5px;font-size:24px;color:#1a1a1a;letter-spacing:0.09px;left:858.0px;">Disabled</span>
<div style="position:absolute;left:1280px;top:52.5px;width:26px;height:26px;background:#20ad2e;border-radius:50%"></div>
<span class="t" style="top:44.0px;font-size:24px;color:#1a1a1a;letter-spacing:1.01px;left:1320.6px;">OK</span>
<span class="t" style="top:43.5px;font-size:24px;color:#1a1a1a;letter-spacing:-0.64px;left:1704.0px;">PD</span>
<span class="t" style="top:43.5px;font-size:24px;color:#1a1a1a;letter-spacing:0.14px;left:2127.0px;">19.61 KB</span>
<span class="t" style="top:43.5px;font-size:24px;color:#1a1a1a;letter-spacing:1.04px;left:2550.0px;">133 / 0 / 155</span>
<span class="t" style="top:43.5px;font-size:24px;color:#1a1a1a;letter-spacing:-0.07px;left:2973.0px;">Braodband</span>
<span class="t" style="top:98.5px;font-size:24px;color:#1a94d0;letter-spacing:1.16px;left:11.3px;">ntp</span>
<span class="t" style="top:98.5px;font-size:24px;color:#1a1a1a;letter-spacing:-0.45px;left:435.0px;">Test_PD</span>
<span class="t" style="top:98.5px;font-size:24px;color:#1a1a1a;letter-spacing:0.09px;left:858.0px;">Disabled</span>
<div style="position:absolute;left:1282px;top:109.0px;width:26px;height:26px;background:#dc494f;border-radius:50%"></div>
<span class="t" style="top:99.5px;font-size:24px;color:#1a1a1a;letter-spacing:0.14px;left:1320.6px;">Impacted</span>
<span class="t" style="top:98.5px;font-size:24px;color:#1a1a1a;letter-spacing:0.45px;left:1704.0px;">-</span>
<span class="t" style="top:98.5px;font-size:24px;color:#1a1a1a;letter-spacing:0.25px;left:2127.0px;">125.42 KB</span>
<span class="t" style="top:98.5px;font-size:24px;color:#1a1a1a;letter-spacing:0.97px;left:2550.0px;">0 / 3 / 1.2k</span>
<span class="t" style="top:98.5px;font-size:24px;color:#1a1a1a;letter-spacing:-1.02px;left:2973.0px;">4G</span>
<span class="t" style="top:148.5px;font-size:24px;color:#1a1a1a;letter-spacing:-0.07px;left:2973.0px;">Braodband</span>
<span class="t" style="top:195.5px;font-size:24px;color:#1a1a1a;letter-spacing:0.10px;left:2973.0px;">CableMOdem</span>
<span class="t" style="top:246.0px;font-size:24px;color:#1a94d0;letter-spacing:0.45px;left:11.3px;">ssl</span>
<span class="t" style="top:246.0px;font-size:24px;color:#1a1a1a;letter-spacing:0.91px;left:435.0px;">twitchhttps</span>
<span class="t" style="top:296.0px;font-size:24px;color:#1a1a1a;letter-spacing:0.60px;left:435.0px;">youtube</span>
<span class="t" style="top:246.0px;font-size:24px;color:#1a1a1a;letter-spacing:0.96px;left:858.0px;">Multiple</span>
<div style="position:absolute;left:1280px;top:255.5px;width:26px;height:26px;background:#20ad2e;border-radius:50%"></div>
<span class="t" style="top:247.0px;font-size:24px;color:#1a1a1a;letter-spacing:1.01px;left:1320.6px;">OK</span>
<span class="t" style="top:246.0px;font-size:24px;color:#1a1a1a;letter-spacing:0.45px;left:1704.0px;">-</span>
<span class="t" style="top:246.0px;font-size:24px;color:#1a1a1a;letter-spacing:0.40px;left:2127.0px;">6.16 MB</span>
<span class="t" style="top:246.0px;font-size:24px;color:#1a1a1a;letter-spacing:0.97px;left:2550.0px;">0 / 0 / 3.4k</span>
<span class="t" style="top:246.0px;font-size:24px;color:#1a1a1a;letter-spacing:-1.02px;left:2973.0px;">4G</span>
<span class="t" style="top:296.0px;font-size:24px;color:#1a1a1a;letter-spacing:-0.07px;left:2973.0px;">Braodband</span>
<span class="t" style="top:343.0px;font-size:24px;color:#1a1a1a;letter-spacing:0.10px;left:2973.0px;">CableMOdem</span>
</div>
<div style="position:absolute;left:3797px;top:600px;width:42px;height:392px;background:#f1f1f1"></div>
<div style="position:absolute;left:3799px;top:748px;width:38px;height:201px;background:#c1c1c1"></div>
<svg style="left:3808px;top:616px" width="20" height="12" viewBox="0 0 20 12" fill="none"><path d="M0 12 L10 1 L20 12 Z" fill="#505050"/></svg>
<svg style="left:3808px;top:963px" width="20" height="12" viewBox="0 0 20 12" fill="none"><path d="M0 0 L10 11 L20 0 Z" fill="#a3a3a3"/></svg>
<div style="position:absolute;left:441px;top:992px;width:3398px;height:2px;background:#c9cdd0"></div>
<div style="position:absolute;left:441px;top:994px;width:3398px;height:61px;background:#f9fbfb"></div>
<svg style="left:454px;top:1002px" width="36" height="36" viewBox="0 0 36 36" fill="none"><circle cx="18" cy="18" r="15.8" stroke="#4fa8d5" stroke-width="2.3"/><path d="M9 8.5 H22.5 L27.5 13 V28 H9 Z" stroke="#4fa8d5" stroke-width="2.2" stroke-linejoin="round"/><path d="M13 24 C16 23 18 19 18 14 C18 19 20.5 22 24 22.5 M13 24 C16 22 20 21.5 24 22.5" stroke="#4fa8d5" stroke-width="1.5"/></svg>
<span class="t" style="top:1000.8px;font-size:27px;color:#525a64;letter-spacing:-1.09px;left:495.6px;">PDF/CSV</span>
<div style="position:absolute;left:439px;top:1055px;width:3401px;height:2px;background:#c6cacd"></div>
<div style="position:absolute;left:441px;top:1057px;width:3398px;height:119px;background:#fff"></div>
<span class="t" style="top:1064.8px;font-size:28px;color:#2d3742;letter-spacing:0.22px;left:452.6px;">Link Performance</span>
<svg style="left:448px;top:1120.3px" width="38" height="38" viewBox="0 0 38 38" fill="none"><circle cx="15.5" cy="15.5" r="13" stroke="#8a8f94" stroke-width="2.6"/><path d="M25 25 L35 36" stroke="#8a8f94" stroke-width="2.6"/></svg>
<div style="position:absolute;left:488.3px;top:1117.3px;width:3248px;height:44px;box-sizing:border-box;background:#fff;border:2px solid #c1c5c9;border-radius:22px"></div>
<span class="t" style="top:1116.1px;font-size:24px;color:#333;right:125.4px;">12 items</span>
<svg style="left:3745px;top:1125.3px" width="34" height="28" viewBox="0 0 34 28" fill="none"><path d="M1 14 H31 M19 2 L31 14 L19 26" stroke="#555" stroke-width="2.4"/></svg>
<svg style="left:3793px;top:1124.3px" width="30" height="30" viewBox="0 0 30 30" fill="none"><path d="M2 2 L28 28 M28 2 L2 28" stroke="#555" stroke-width="2.4"/></svg>
<div style="position:absolute;left:441px;top:1175px;width:3398px;height:2px;background:#a9adb0"></div>
<div style="position:absolute;left:441px;top:1177px;width:3398px;height:83px;background:#edeeee"></div>
<div style="position:absolute;left:441px;top:1260px;width:3398px;height:2px;background:#c3c7ca"></div>
<div style="position:absolute;left:776.4px;top:1179px;width:2px;height:79px;background:#a1a6a9"></div>
<div style="position:absolute;left:1114.4px;top:1179px;width:2px;height:79px;background:#a1a6a9"></div>
<div style="position:absolute;left:1452.4px;top:1179px;width:2px;height:79px;background:#a1a6a9"></div>
<div style="position:absolute;left:1789.4px;top:1179px;width:2px;height:79px;background:#a1a6a9"></div>
<div style="position:absolute;left:2127.4px;top:1179px;width:2px;height:79px;background:#a1a6a9"></div>
<div style="position:absolute;left:2464.4px;top:1179px;width:2px;height:79px;background:#a1a6a9"></div>
<div style="position:absolute;left:2802.4px;top:1179px;width:2px;height:79px;background:#a1a6a9"></div>
<div style="position:absolute;left:3139.4px;top:1179px;width:2px;height:79px;background:#a1a6a9"></div>
<div style="position:absolute;left:3477.4px;top:1179px;width:2px;height:79px;background:#a1a6a9"></div>
<div style="position:absolute;left:3814.4px;top:1179px;width:2px;height:79px;background:#a1a6a9"></div>
<span class="t" style="top:1212.3px;font-size:20px;color:#2d3742;font-weight:700;letter-spacing:2.01px;left:452.4px;">DEVICE</span>
<span class="t" style="top:1212.3px;font-size:20px;color:#2d3742;font-weight:700;letter-spacing:1.91px;left:791.0px;">LINK TAG</span>
<span class="t" style="top:1212.3px;font-size:20px;color:#2d3742;font-weight:700;letter-spacing:1.87px;left:1129.0px;">LINK TYPE</span>
<span class="t" style="top:1212.3px;font-size:20px;color:#2d3742;font-weight:700;letter-spacing:1.76px;left:1467.0px;">INTERFACE</span>
<span class="t" style="top:1212.3px;font-size:20px;color:#2d3742;font-weight:700;letter-spacing:2.28px;left:1804.0px;">LINK</span>
<span class="t" style="top:1183.3px;font-size:20px;color:#2d3742;font-weight:700;letter-spacing:1.82px;left:2142.0px;">ERROR CORRECTION</span>
<span class="t" style="top:1212.3px;font-size:20px;color:#2d3742;font-weight:700;letter-spacing:1.72px;left:2142.0px;">APPLIED</span>
<span class="t" style="top:1212.3px;font-size:20px;color:#2d3742;font-weight:700;letter-spacing:2.42px;left:2479.0px;">LINK NOTIFICATIONS</span>
<span class="t" style="top:1212.3px;font-size:20px;color:#2d3742;font-weight:700;letter-spacing:2.01px;left:2817.0px;">LATENCY</span>
<span class="t" style="top:1212.3px;font-size:20px;color:#2d3742;font-weight:700;letter-spacing:1.42px;left:3154.0px;">JITTER</span>
<span class="t" style="top:1212.3px;font-size:20px;color:#2d3742;font-weight:700;letter-spacing:1.30px;left:3492.0px;">PACKET LOSS</span>
<div class="clip" style="left:441px;top:1262px;width:3356px;height:418px">
<div style="position:absolute;left:0px;top:0px;width:3356px;height:54px;background:#fff"></div>
<div style="position:absolute;left:0px;top:52px;width:3356px;height:2px;background:#eceff1"></div>
<div style="position:absolute;left:336px;top:3px;width:2px;height:49px;background:#dbdee1"></div>
<div style="position:absolute;left:674px;top:3px;width:2px;height:49px;background:#dbdee1"></div>
<div style="position:absolute;left:1012px;top:3px;width:2px;height:49px;background:#dbdee1"></div>
<div style="position:absolute;left:1349px;top:3px;width:2px;height:49px;background:#dbdee1"></div>
<div style="position:absolute;left:1687px;top:3px;width:2px;height:49px;background:#dbdee1"></div>
<div style="position:absolute;left:2024px;top:3px;width:2px;height:49px;background:#dbdee1"></div>
<div style="position:absolute;left:2362px;top:3px;width:2px;height:49px;background:#dbdee1"></div>
<div style="position:absolute;left:2699px;top:3px;width:2px;height:49px;background:#dbdee1"></div>
<div style="position:absolute;left:3037px;top:3px;width:2px;height:49px;background:#dbdee1"></div>
<span class="t" style="top:3.5px;font-size:24px;color:#1a1a1a;letter-spacing:0.35px;left:11.3px;">Branch-Vm100-HA2</span>
<span class="t" style="top:3.5px;font-size:24px;color:#1a1a1a;letter-spacing:0.23px;left:350.0px;">No Data</span>
<span class="t" style="top:3.5px;font-size:24px;color:#1a1a1a;letter-spacing:0.23px;left:688.0px;">No Data</span>
<span class="t" style="top:3.5px;font-size:24px;color:#1a1a1a;letter-spacing:0.23px;left:1026.0px;">No Data</span>
<span class="t" style="top:3.5px;font-size:24px;color:#1a94d0;letter-spacing:1.10px;left:1363.0px;">ethernet1/4</span>
<span class="t" style="top:3.5px;font-size:24px;color:#1a1a1a;letter-spacing:0.45px;left:1701.0px;">-</span>
<div style="position:absolute;left:2038px;top:13.0px;width:25px;height:25px;background:#20ad2e;border-radius:50%"></div>
<span class="t" style="top:5.5px;font-size:24px;color:#1a1a1a;letter-spacing:0.45px;left:2072.0px;">0</span>
<div style="position:absolute;left:2375px;top:13.0px;width:27px;height:27px;background:#c99311;border-radius:50%"></div>
<span class="t" style="top:5.5px;font-size:24px;color:#1a1a1a;letter-spacing:0.42px;left:2410.0px;">Warning</span>
<div style="position:absolute;left:2712px;top:13.0px;width:27px;height:27px;background:#c99311;border-radius:50%"></div>
<span class="t" style="top:5.5px;font-size:24px;color:#1a1a1a;letter-spacing:0.42px;left:2747.0px;">Warning</span>
<div style="position:absolute;left:3050px;top:13.0px;width:27px;height:27px;background:#c99311;border-radius:50%"></div>
<span class="t" style="top:5.5px;font-size:24px;color:#1a1a1a;letter-spacing:0.42px;left:3085.0px;">Warning</span>
<div style="position:absolute;left:0px;top:54px;width:3356px;height:55px;background:#eef5f8"></div>
<div style="position:absolute;left:0px;top:107px;width:3356px;height:2px;background:#edf1f3"></div>
<div style="position:absolute;left:336px;top:57px;width:2px;height:50px;background:#dbdee1"></div>
<div style="position:absolute;left:674px;top:57px;width:2px;height:50px;background:#dbdee1"></div>
<div style="position:absolute;left:1012px;top:57px;width:2px;height:50px;background:#dbdee1"></div>
<div style="position:absolute;left:1349px;top:57px;width:2px;height:50px;background:#dbdee1"></div>
<div style="position:absolute;left:1687px;top:57px;width:2px;height:50px;background:#dbdee1"></div>
<div style="position:absolute;left:2024px;top:57px;width:2px;height:50px;background:#dbdee1"></div>
<div style="position:absolute;left:2362px;top:57px;width:2px;height:50px;background:#dbdee1"></div>
<div style="position:absolute;left:2699px;top:57px;width:2px;height:50px;background:#dbdee1"></div>
<div style="position:absolute;left:3037px;top:57px;width:2px;height:50px;background:#dbdee1"></div>
<span class="t" style="top:57.5px;font-size:24px;color:#1a1a1a;letter-spacing:0.35px;left:11.3px;">Branch-Vm100-HA1</span>
<span class="t" style="top:57.5px;font-size:24px;color:#1a1a1a;letter-spacing:-0.07px;left:350.0px;">Braodband</span>
<span class="t" style="top:57.5px;font-size:24px;color:#1a1a1a;letter-spacing:0.03px;left:688.0px;">Fiber</span>
<span class="t" style="top:57.5px;font-size:24px;color:#1a1a1a;letter-spacing:1.10px;left:1026.0px;">ethernet1/2</span>
<span class="t" style="top:57.5px;font-size:24px;color:#1a94d0;letter-spacing:0.63px;left:1363.0px;">tl_0102_01549900000069...</span>
<span class="t" style="top:57.5px;font-size:24px;color:#1a1a1a;letter-spacing:-0.64px;left:1701.0px;">PD</span>
<div style="position:absolute;left:2040px;top:69.0px;width:25px;height:25px;background:#dc494f;border-radius:50%"></div>
<span class="t" style="top:59.5px;font-size:24px;color:#1a94d0;letter-spacing:1.50px;left:2072.0px;">50</span>
<div style="position:absolute;left:2375px;top:67.0px;width:27px;height:27px;background:#c99311;border-radius:50%"></div>
<span class="t" style="top:59.5px;font-size:24px;color:#1a1a1a;letter-spacing:0.42px;left:2410.0px;">Warning</span>
<div style="position:absolute;left:2712px;top:67.0px;width:27px;height:27px;background:#c99311;border-radius:50%"></div>
<span class="t" style="top:59.5px;font-size:24px;color:#1a1a1a;letter-spacing:0.42px;left:2747.0px;">Warning</span>
<div style="position:absolute;left:3050px;top:67.0px;width:27px;height:27px;background:#c99311;border-radius:50%"></div>
<span class="t" style="top:59.5px;font-size:24px;color:#1a1a1a;letter-spacing:0.42px;left:3085.0px;">Warning</span>
<div style="position:absolute;left:0px;top:109px;width:3356px;height:55px;background:#fff"></div>
<div style="position:absolute;left:0px;top:162px;width:3356px;height:2px;background:#eceff1"></div>
<div style="position:absolute;left:336px;top:112px;width:2px;height:50px;background:#dbdee1"></div>
<div style="position:absolute;left:674px;top:112px;width:2px;height:50px;background:#dbdee1"></div>
<div style="position:absolute;left:1012px;top:112px;width:2px;height:50px;background:#dbdee1"></div>
<div style="position:absolute;left:1349px;top:112px;width:2px;height:50px;background:#dbdee1"></div>
<div style="position:absolute;left:1687px;top:112px;width:2px;height:50px;background:#dbdee1"></div>
<div style="position:absolute;left:2024px;top:112px;width:2px;height:50px;background:#dbdee1"></div>
<div style="position:absolute;left:2362px;top:112px;width:2px;height:50px;background:#dbdee1"></div>
<div style="position:absolute;left:2699px;top:112px;width:2px;height:50px;background:#dbdee1"></div>
<div style="position:absolute;left:3037px;top:112px;width:2px;height:50px;background:#dbdee1"></div>
<span class="t" style="top:112.5px;font-size:24px;color:#1a1a1a;letter-spacing:0.35px;left:11.3px;">Branch-Vm100-HA1</span>
<span class="t" style="top:112.5px;font-size:24px;color:#1a1a1a;letter-spacing:0.23px;left:350.0px;">No Data</span>
<span class="t" style="top:112.5px;font-size:24px;color:#1a1a1a;letter-spacing:0.23px;left:688.0px;">No Data</span>
<span class="t" style="top:112.5px;font-size:24px;color:#1a1a1a;letter-spacing:0.23px;left:1026.0px;">No Data</span>
<span class="t" style="top:112.5px;font-size:24px;color:#1a94d0;letter-spacing:0.63px;left:1363.0px;">tl_0103_01549900000069...</span>
<span class="t" style="top:112.5px;font-size:24px;color:#1a1a1a;letter-spacing:0.45px;left:1701.0px;">-</span>
<div style="position:absolute;left:2040px;top:124.0px;width:25px;height:25px;background:#dc494f;border-radius:50%"></div>
<span class="t" style="top:114.5px;font-size:24px;color:#1a94d0;letter-spacing:1.50px;left:2072.0px;">49</span>
<div style="position:absolute;left:2375px;top:122.0px;width:27px;height:27px;background:#c99311;border-radius:50%"></div>
<span class="t" style="top:114.5px;font-size:24px;color:#1a1a1a;letter-spacing:0.42px;left:2410.0px;">Warning</span>
<div style="position:absolute;left:2712px;top:122.0px;width:27px;height:27px;background:#c99311;border-radius:50%"></div>
<span class="t" style="top:114.5px;font-size:24px;color:#1a1a1a;letter-spacing:0.42px;left:2747.0px;">Warning</span>
<div style="position:absolute;left:3050px;top:122.0px;width:27px;height:27px;background:#c99311;border-radius:50%"></div>
<span class="t" style="top:114.5px;font-size:24px;color:#1a1a1a;letter-spacing:0.42px;left:3085.0px;">Warning</span>
<div style="position:absolute;left:0px;top:164px;width:3356px;height:54px;background:#eef5f8"></div>
<div style="position:absolute;left:0px;top:216px;width:3356px;height:2px;background:#edf1f3"></div>
<div style="position:absolute;left:336px;top:167px;width:2px;height:49px;background:#dbdee1"></div>
<div style="position:absolute;left:674px;top:167px;width:2px;height:49px;background:#dbdee1"></div>
<div style="position:absolute;left:1012px;top:167px;width:2px;height:49px;background:#dbdee1"></div>
<div style="position:absolute;left:1349px;top:167px;width:2px;height:49px;background:#dbdee1"></div>
<div style="position:absolute;left:1687px;top:167px;width:2px;height:49px;background:#dbdee1"></div>
<div style="position:absolute;left:2024px;top:167px;width:2px;height:49px;background:#dbdee1"></div>
<div style="position:absolute;left:2362px;top:167px;width:2px;height:49px;background:#dbdee1"></div>
<div style="position:absolute;left:2699px;top:167px;width:2px;height:49px;background:#dbdee1"></div>
<div style="position:absolute;left:3037px;top:167px;width:2px;height:49px;background:#dbdee1"></div>
<span class="t" style="top:167.5px;font-size:24px;color:#1a1a1a;letter-spacing:0.35px;left:11.3px;">Branch-Vm100-HA2</span>
<span class="t" style="top:167.5px;font-size:24px;color:#1a1a1a;letter-spacing:0.23px;left:350.0px;">No Data</span>
<span class="t" style="top:167.5px;font-size:24px;color:#1a1a1a;letter-spacing:0.23px;left:688.0px;">No Data</span>
<span class="t" style="top:167.5px;font-size:24px;color:#1a1a1a;letter-spacing:0.23px;left:1026.0px;">No Data</span>
<span class="t" style="top:167.5px;font-size:24px;color:#1a94d0;letter-spacing:1.10px;left:1363.0px;">ethernet1/2</span>
<span class="t" style="top:167.5px;font-size:24px;color:#1a1a1a;letter-spacing:0.45px;left:1701.0px;">-</span>
<div style="position:absolute;left:2038px;top:177.0px;width:25px;height:25px;background:#20ad2e;border-radius:50%"></div>
<span class="t" style="top:169.5px;font-size:24px;color:#1a1a1a;letter-spacing:0.45px;left:2072.0px;">0</span>
<div style="position:absolute;left:2375px;top:177.0px;width:27px;height:27px;background:#c99311;border-radius:50%"></div>
<span class="t" style="top:169.5px;font-size:24px;color:#1a1a1a;letter-spacing:0.42px;left:2410.0px;">Warning</span>
<div style="position:absolute;left:2712px;top:177.0px;width:27px;height:27px;background:#c99311;border-radius:50%"></div>
<span class="t" style="top:169.5px;font-size:24px;color:#1a1a1a;letter-spacing:0.42px;left:2747.0px;">Warning</span>
<div style="position:absolute;left:3050px;top:177.0px;width:27px;height:27px;background:#c99311;border-radius:50%"></div>
<span class="t" style="top:169.5px;font-size:24px;color:#1a1a1a;letter-spacing:0.42px;left:3085.0px;">Warning</span>
<div style="position:absolute;left:0px;top:218px;width:3356px;height:54px;background:#fff"></div>
<div style="position:absolute;left:0px;top:270px;width:3356px;height:2px;background:#eceff1"></div>
<div style="position:absolute;left:336px;top:221px;width:2px;height:49px;background:#dbdee1"></div>
<div style="position:absolute;left:674px;top:221px;width:2px;height:49px;background:#dbdee1"></div>
<div style="position:absolute;left:1012px;top:221px;width:2px;height:49px;background:#dbdee1"></div>
<div style="position:absolute;left:1349px;top:221px;width:2px;height:49px;background:#dbdee1"></div>
<div style="position:absolute;left:1687px;top:221px;width:2px;height:49px;background:#dbdee1"></div>
<div style="position:absolute;left:2024px;top:221px;width:2px;height:49px;background:#dbdee1"></div>
<div style="position:absolute;left:2362px;top:221px;width:2px;height:49px;background:#dbdee1"></div>
<div style="position:absolute;left:2699px;top:221px;width:2px;height:49px;background:#dbdee1"></div>
<div style="position:absolute;left:3037px;top:221px;width:2px;height:49px;background:#dbdee1"></div>
<span class="t" style="top:221.5px;font-size:24px;color:#1a1a1a;letter-spacing:0.35px;left:11.3px;">Branch-Vm100-HA2</span>
<span class="t" style="top:221.5px;font-size:24px;color:#1a1a1a;letter-spacing:0.23px;left:350.0px;">No Data</span>
<span class="t" style="top:221.5px;font-size:24px;color:#1a1a1a;letter-spacing:0.23px;left:688.0px;">No Data</span>
<span class="t" style="top:221.5px;font-size:24px;color:#1a1a1a;letter-spacing:0.23px;left:1026.0px;">No Data</span>
<span class="t" style="top:221.5px;font-size:24px;color:#1a94d0;letter-spacing:1.10px;left:1363.0px;">ethernet1/3</span>
<span class="t" style="top:221.5px;font-size:24px;color:#1a1a1a;letter-spacing:0.45px;left:1701.0px;">-</span>
<div style="position:absolute;left:2038px;top:231.0px;width:25px;height:25px;background:#20ad2e;border-radius:50%"></div>
<span class="t" style="top:223.5px;font-size:24px;color:#1a1a1a;letter-spacing:0.45px;left:2072.0px;">0</span>
<div style="position:absolute;left:2375px;top:231.0px;width:27px;height:27px;background:#c99311;border-radius:50%"></div>
<span class="t" style="top:223.5px;font-size:24px;color:#1a1a1a;letter-spacing:0.42px;left:2410.0px;">Warning</span>
<div style="position:absolute;left:2712px;top:231.0px;width:27px;height:27px;background:#c99311;border-radius:50%"></div>
<span class="t" style="top:223.5px;font-size:24px;color:#1a1a1a;letter-spacing:0.42px;left:2747.0px;">Warning</span>
<div style="position:absolute;left:3050px;top:231.0px;width:27px;height:27px;background:#c99311;border-radius:50%"></div>
<span class="t" style="top:223.5px;font-size:24px;color:#1a1a1a;letter-spacing:0.42px;left:3085.0px;">Warning</span>
<div style="position:absolute;left:0px;top:272px;width:3356px;height:55px;background:#eef5f8"></div>
<div style="position:absolute;left:0px;top:325px;width:3356px;height:2px;background:#edf1f3"></div>
<div style="position:absolute;left:336px;top:275px;width:2px;height:50px;background:#dbdee1"></div>
<div style="position:absolute;left:674px;top:275px;width:2px;height:50px;background:#dbdee1"></div>
<div style="position:absolute;left:1012px;top:275px;width:2px;height:50px;background:#dbdee1"></div>
<div style="position:absolute;left:1349px;top:275px;width:2px;height:50px;background:#dbdee1"></div>
<div style="position:absolute;left:1687px;top:275px;width:2px;height:50px;background:#dbdee1"></div>
<div style="position:absolute;left:2024px;top:275px;width:2px;height:50px;background:#dbdee1"></div>
<div style="position:absolute;left:2362px;top:275px;width:2px;height:50px;background:#dbdee1"></div>
<div style="position:absolute;left:2699px;top:275px;width:2px;height:50px;background:#dbdee1"></div>
<div style="position:absolute;left:3037px;top:275px;width:2px;height:50px;background:#dbdee1"></div>
<span class="t" style="top:275.5px;font-size:24px;color:#1a1a1a;letter-spacing:0.35px;left:11.3px;">Branch-Vm100-HA2</span>
<span class="t" style="top:275.5px;font-size:24px;color:#1a1a1a;letter-spacing:0.23px;left:350.0px;">No Data</span>
<span class="t" style="top:275.5px;font-size:24px;color:#1a1a1a;letter-spacing:0.23px;left:688.0px;">No Data</span>
<span class="t" style="top:275.5px;font-size:24px;color:#1a1a1a;letter-spacing:0.23px;left:1026.0px;">No Data</span>
<span class="t" style="top:275.5px;font-size:24px;color:#1a94d0;letter-spacing:0.63px;left:1363.0px;">tl_0103_01549900000069...</span>
<span class="t" style="top:275.5px;font-size:24px;color:#1a1a1a;letter-spacing:0.45px;left:1701.0px;">-</span>
<div style="position:absolute;left:2040px;top:287.0px;width:25px;height:25px;background:#dc494f;border-radius:50%"></div>
<span class="t" style="top:277.5px;font-size:24px;color:#1a94d0;letter-spacing:0.45px;left:2072.0px;">1</span>
<div style="position:absolute;left:2375px;top:285.0px;width:27px;height:27px;background:#c99311;border-radius:50%"></div>
<span class="t" style="top:277.5px;font-size:24px;color:#1a1a1a;letter-spacing:0.42px;left:2410.0px;">Warning</span>
<div style="position:absolute;left:2712px;top:285.0px;width:27px;height:27px;background:#c99311;border-radius:50%"></div>
<span class="t" style="top:277.5px;font-size:24px;color:#1a1a1a;letter-spacing:0.42px;left:2747.0px;">Warning</span>
<div style="position:absolute;left:3050px;top:285.0px;width:27px;height:27px;background:#c99311;border-radius:50%"></div>
<span class="t" style="top:277.5px;font-size:24px;color:#1a1a1a;letter-spacing:0.42px;left:3085.0px;">Warning</span>
<div style="position:absolute;left:0px;top:327px;width:3356px;height:55px;background:#fff"></div>
<div style="position:absolute;left:0px;top:380px;width:3356px;height:2px;background:#eceff1"></div>
<div style="position:absolute;left:336px;top:330px;width:2px;height:50px;background:#dbdee1"></div>
<div style="position:absolute;left:674px;top:330px;width:2px;height:50px;background:#dbdee1"></div>
<div style="position:absolute;left:1012px;top:330px;width:2px;height:50px;background:#dbdee1"></div>
<div style="position:absolute;left:1349px;top:330px;width:2px;height:50px;background:#dbdee1"></div>
<div style="position:absolute;left:1687px;top:330px;width:2px;height:50px;background:#dbdee1"></div>
<div style="position:absolute;left:2024px;top:330px;width:2px;height:50px;background:#dbdee1"></div>
<div style="position:absolute;left:2362px;top:330px;width:2px;height:50px;background:#dbdee1"></div>
<div style="position:absolute;left:2699px;top:330px;width:2px;height:50px;background:#dbdee1"></div>
<div style="position:absolute;left:3037px;top:330px;width:2px;height:50px;background:#dbdee1"></div>
<span class="t" style="top:330.5px;font-size:24px;color:#1a1a1a;letter-spacing:0.35px;left:11.3px;">Branch-Vm100-HA1</span>
<span class="t" style="top:330.5px;font-size:24px;color:#1a1a1a;letter-spacing:-1.02px;left:350.0px;">4G</span>
<span class="t" style="top:330.5px;font-size:24px;color:#1a1a1a;letter-spacing:1.06px;left:688.0px;">LTE/3G/4G/5G</span>
<span class="t" style="top:330.5px;font-size:24px;color:#1a1a1a;letter-spacing:1.10px;left:1026.0px;">ethernet1/4</span>
<span class="t" style="top:330.5px;font-size:24px;color:#1a94d0;letter-spacing:0.63px;left:1363.0px;">tl_0104_01549900000069...</span>
<span class="t" style="top:330.5px;font-size:24px;color:#1a1a1a;letter-spacing:0.45px;left:1701.0px;">-</span>
<div style="position:absolute;left:2040px;top:342.0px;width:25px;height:25px;background:#dc494f;border-radius:50%"></div>
<span class="t" style="top:332.5px;font-size:24px;color:#1a94d0;letter-spacing:1.50px;left:2072.0px;">52</span>
<div style="position:absolute;left:2375px;top:340.0px;width:27px;height:27px;background:#c99311;border-radius:50%"></div>
<span class="t" style="top:332.5px;font-size:24px;color:#1a1a1a;letter-spacing:0.42px;left:2410.0px;">Warning</span>
<div style="position:absolute;left:2712px;top:340.0px;width:27px;height:27px;background:#c99311;border-radius:50%"></div>
<span class="t" style="top:332.5px;font-size:24px;color:#1a1a1a;letter-spacing:0.42px;left:2747.0px;">Warning</span>
<div style="position:absolute;left:3050px;top:340.0px;width:27px;height:27px;background:#c99311;border-radius:50%"></div>
<span class="t" style="top:332.5px;font-size:24px;color:#1a1a1a;letter-spacing:0.42px;left:3085.0px;">Warning</span>
<div style="position:absolute;left:0px;top:382px;width:3356px;height:54px;background:#eef5f8"></div>
<div style="position:absolute;left:0px;top:434px;width:3356px;height:2px;background:#edf1f3"></div>
<div style="position:absolute;left:336px;top:385px;width:2px;height:49px;background:#dbdee1"></div>
<div style="position:absolute;left:674px;top:385px;width:2px;height:49px;background:#dbdee1"></div>
<div style="position:absolute;left:1012px;top:385px;width:2px;height:49px;background:#dbdee1"></div>
<div style="position:absolute;left:1349px;top:385px;width:2px;height:49px;background:#dbdee1"></div>
<div style="position:absolute;left:1687px;top:385px;width:2px;height:49px;background:#dbdee1"></div>
<div style="position:absolute;left:2024px;top:385px;width:2px;height:49px;background:#dbdee1"></div>
<div style="position:absolute;left:2362px;top:385px;width:2px;height:49px;background:#dbdee1"></div>
<div style="position:absolute;left:2699px;top:385px;width:2px;height:49px;background:#dbdee1"></div>
<div style="position:absolute;left:3037px;top:385px;width:2px;height:49px;background:#dbdee1"></div>
<span class="t" style="top:385.5px;font-size:24px;color:#1a1a1a;letter-spacing:0.35px;left:11.3px;">Branch-Vm100-HA2</span>
<span class="t" style="top:385.5px;font-size:24px;color:#1a1a1a;letter-spacing:0.23px;left:350.0px;">No Data</span>
<span class="t" style="top:385.5px;font-size:24px;color:#1a1a1a;letter-spacing:0.23px;left:688.0px;">No Data</span>
<span class="t" style="top:385.5px;font-size:24px;color:#1a1a1a;letter-spacing:0.23px;left:1026.0px;">No Data</span>
<span class="t" style="top:385.5px;font-size:24px;color:#1a94d0;letter-spacing:0.63px;left:1363.0px;">tl_0102_01549900000069...</span>
<span class="t" style="top:385.5px;font-size:24px;color:#1a1a1a;letter-spacing:0.45px;left:1701.0px;">-</span>
<div style="position:absolute;left:2040px;top:397.0px;width:25px;height:25px;background:#dc494f;border-radius:50%"></div>
<span class="t" style="top:387.5px;font-size:24px;color:#1a94d0;letter-spacing:0.45px;left:2072.0px;">1</span>
<div style="position:absolute;left:2375px;top:395.0px;width:27px;height:27px;background:#c99311;border-radius:50%"></div>
<span class="t" style="top:387.5px;font-size:24px;color:#1a1a1a;letter-spacing:0.42px;left:2410.0px;">Warning</span>
<div style="position:absolute;left:2712px;top:395.0px;width:27px;height:27px;background:#c99311;border-radius:50%"></div>
<span class="t" style="top:387.5px;font-size:24px;color:#1a1a1a;letter-spacing:0.42px;left:2747.0px;">Warning</span>
<div style="position:absolute;left:3050px;top:395.0px;width:27px;height:27px;background:#c99311;border-radius:50%"></div>
<span class="t" style="top:387.5px;font-size:24px;color:#1a1a1a;letter-spacing:0.42px;left:3085.0px;">Warning</span>
</div>
<div style="position:absolute;left:3797px;top:1262px;width:42px;height:418px;background:#f1f1f1"></div>
<div style="position:absolute;left:3799px;top:1304px;width:38px;height:213px;background:#c1c1c1"></div>
<svg style="left:3808px;top:1278px" width="20" height="12" viewBox="0 0 20 12" fill="none"><path d="M0 12 L10 1 L20 12 Z" fill="#a3a3a3"/></svg>
<svg style="left:3808px;top:1652px" width="20" height="12" viewBox="0 0 20 12" fill="none"><path d="M0 0 L10 11 L20 0 Z" fill="#505050"/></svg>
<div style="position:absolute;left:441px;top:1680px;width:3398px;height:2px;background:#cdd1d4"></div>
<div style="position:absolute;left:441px;top:1682px;width:3398px;height:61px;background:#f9fbfb"></div>
<svg style="left:454px;top:1690px" width="36" height="36" viewBox="0 0 36 36" fill="none"><circle cx="18" cy="18" r="15.8" stroke="#4fa8d5" stroke-width="2.3"/><path d="M9 8.5 H22.5 L27.5 13 V28 H9 Z" stroke="#4fa8d5" stroke-width="2.2" stroke-linejoin="round"/><path d="M13 24 C16 23 18 19 18 14 C18 19 20.5 22 24 22.5 M13 24 C16 22 20 21.5 24 22.5" stroke="#4fa8d5" stroke-width="1.5"/></svg>
<span class="t" style="top:1688.8px;font-size:27px;color:#525a64;letter-spacing:-1.09px;left:495.6px;">PDF/CSV</span>
<div style="position:absolute;left:0px;top:1743px;width:3840px;height:61px;background:#020f17"></div>
<span class="t" style="top:1752.0px;font-size:26px;color:#838c92;letter-spacing:-0.31px;left:29.8px;">admin</span>
<div style="position:absolute;left:116.2px;top:1758px;width:5px;height:30px;background:linear-gradient(90deg,#46525a,#1a252d)"></div>
<span class="t" style="top:1752.0px;font-size:26px;color:#9aa3a9;letter-spacing:-0.19px;left:133.4px;">Logout</span>
<div style="position:absolute;left:224px;top:1758px;width:5px;height:30px;background:linear-gradient(90deg,#46525a,#1a252d)"></div>
<span class="t" style="top:1752.0px;font-size:26px;color:#9aa3a9;letter-spacing:0.56px;left:241.0px;">Last Login Time: 07/29/2020 10:30:47</span>
<div style="position:absolute;left:709.8px;top:1758px;width:5px;height:30px;background:linear-gradient(90deg,#46525a,#1a252d)"></div>
<span class="t" style="top:1752.0px;font-size:26px;color:#9aa3a9;letter-spacing:0.42px;left:725.8px;">Session Expire Time: 08/29/2020 10:24:05</span>
<svg style="left:3166px;top:1763px" width="35" height="24" viewBox="0 0 35 24" fill="none"><rect x="1.2" y="1.2" width="32.6" height="21.6" rx="1.5" stroke="#b9c0c5" stroke-width="2.4"/><path d="M2 2.5 L17.5 15 L33 2.5" stroke="#b9c0c5" stroke-width="2.4"/></svg>
<div style="position:absolute;left:3213px;top:1758px;width:5px;height:30px;background:linear-gradient(90deg,#46525a,#1a252d)"></div>
<span class="t" style="top:1752.0px;font-size:26px;color:#9aa3a9;letter-spacing:-0.10px;left:3230.0px;">active</span>
<div style="position:absolute;left:3309px;top:1758px;width:5px;height:30px;background:linear-gradient(90deg,#46525a,#1a252d)"></div>
<svg style="left:3329px;top:1758px" width="38" height="32" viewBox="0 0 38 32" fill="none"><path d="M1 5 L4 8 L10 1 M1 15.5 L4 18.5 L10 11.5 M1 26 L4 29 L10 22" stroke="#b9c0c5" stroke-width="2.2"/><path d="M16 6 H37 M16 17 H37 M16 28 H37" stroke="#b9c0c5" stroke-width="2.4"/></svg>
<span class="t" style="top:1752.0px;font-size:26px;color:#9aa3a9;letter-spacing:-1.87px;left:3376.0px;">Tasks</span>
<div style="position:absolute;left:3456px;top:1758px;width:5px;height:30px;background:linear-gradient(90deg,#46525a,#1a252d)"></div>
<span class="t" style="top:1752.0px;font-size:26px;color:#9aa3a9;letter-spacing:-0.96px;left:3478.0px;">Language</span>
<svg style="left:3617px;top:1759px" width="46" height="34" viewBox="0 0 46 34" fill="none"><path d="M0 17 L16 1 L22 7 L6 23 Z M30 0 L36 6 L26 16 L29 19 L14 34 L8 28 L18 18 L15 15 Z M40 10 L46 16 L30 32 L24 26 Z" fill="#f4552a"/></svg>
<span class="t" style="top:1753.2px;font-size:33px;color:#fff;font-weight:700;transform:scaleX(1.0908);transform-origin:0 50%;left:3670.4px;">paloalto</span>
<span class="t" style="top:1774.6px;font-size:7px;color:#dfe3e6;font-weight:700;letter-spacing:3.59px;left:3741.0px;">NETWORKS</span>
<div style="position:absolute;left:439px;top:930px;width:8px;height:80px;background:rgba(228,228,228,.6);border-radius:0 4px 4px 0"></div>
<svg style="left:440px;top:965px" width="6" height="10" viewBox="0 0 6 10" fill="none"><path d="M5.5 0 L0.5 5 L5.5 10 Z" fill="#b5b5b5"/></svg>
</body></html>
